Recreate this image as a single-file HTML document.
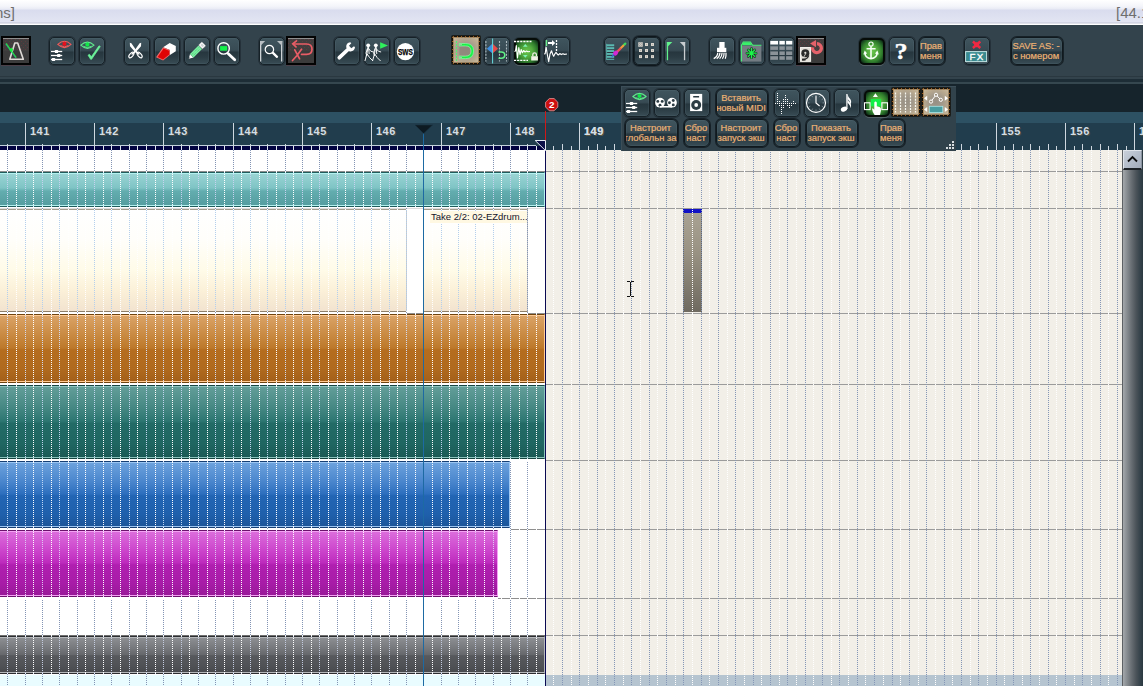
<!DOCTYPE html>
<html lang="ru"><head><meta charset="utf-8"><title>REAPER</title>
<style>
*{box-sizing:border-box;margin:0;padding:0}
html,body{width:1143px;height:686px;overflow:hidden;background:#33434c;font-family:"Liberation Sans",sans-serif}
#app{position:relative;width:1143px;height:686px;overflow:hidden;background:#33434c}
.abs{position:absolute}
#title{left:0;top:0;width:1143px;height:25px;background:linear-gradient(#ffffff 0px,#f4f5fa 6px,#e9ebf5 9px,#d9dcee 10px,#dfe2f1 18px,#e3e5f2 22px,#c3c6d6 23px,#ffffff 24px,#ffffff 25px)}
#title span{position:absolute;top:3px;font-size:15px;line-height:20px;color:#6e6e6e;white-space:nowrap}
#tb{left:0;top:25px;width:1143px;height:59px;background:#33434c}
.btn{position:absolute;width:26px;height:28px;border-radius:5px;border:1px solid #162127;
 background:linear-gradient(#4b626b 0px,#3f545d 1px,#384b54 12px,#34464f 13px,#26363e 14px,#2b3c44 19px,#374a53 25px,#445a63 26px);
 box-shadow:0 0 0 1px rgba(18,27,33,.42),inset 1px 0 0 rgba(120,150,160,.13),inset -1px 0 0 rgba(120,150,160,.13)}
.btn svg{position:absolute;left:-1px;top:-1px;overflow:visible}
.btn.txt{color:#ecb274;-webkit-text-stroke:.2px #ecb274;font-size:9.4px;line-height:10px;white-space:nowrap;overflow:hidden;padding-top:2.75px;border-radius:6px;border:1px solid #10191e;
 display:flex;flex-direction:column;align-items:center;padding-right:2px;box-shadow:0 0 0 1px rgba(14,22,27,.75),inset 1px 0 0 rgba(120,150,160,.1),inset -1px 0 0 rgba(120,150,160,.1)}
.btn.txt div{flex:none}
.btn.pressed{width:30px;height:29px;border-radius:0;border:2px solid #030303;background:#3b3b3b;box-shadow:0 1px 0 rgba(120,60,70,.35)}
.btn.pressed svg{left:-2px;top:-2px}
.btn.tan{width:28px;height:28px;border-radius:1px;border:1px solid #15120a;background:radial-gradient(ellipse 60% 60% at 50% 50%,#968f84 0%,#a39a8b 45%,#b8a98f 80%,#c5b598 100%);box-shadow:0 0 0 1px rgba(21,18,10,.75),inset 0 0 0 1px rgba(100,64,22,.4)}
.btn.tan svg{left:-1px;top:-1px}
.btn.green{border:2px solid #060c08;background:radial-gradient(ellipse 64% 64% at 50% 50%,#6ac64c 0%,#52ab3e 40%,#2f7c2c 72%,#10341a 100%);box-shadow:0 0 0 1px rgba(20,30,36,.4),0 1px 0 rgba(190,200,205,.55)}
.btn.green{margin-top:1px;height:27px}
.btn.green svg{left:-2px;top:-3px}
.btn.hov{box-shadow:0 0 0 1px #0e171c,0 0 0 2px rgba(14,23,28,.45)}
#dark{left:0;top:84px;width:1143px;height:28px;background:#16242c}
#band{left:0;top:112px;width:1143px;height:11px;background:#2d5163}
#ruler{left:0;top:123px;width:1143px;height:27px;background:#213d4d}
.mnum{position:absolute;top:125px;font-size:11px;font-weight:bold;line-height:12px;color:#d3dde6;letter-spacing:.45px;text-shadow:1px 1px 0 rgba(120,100,60,.45)}
#arr{left:0;top:150px;width:545px;height:536px;background:#ffffff}
#empty{left:546px;top:150px;width:576px;height:536px;background:#f2efe8}
#endline{left:545px;top:150px;width:1px;height:536px;background:#0a0a52}
#vs{left:1122px;top:150px;width:21px;height:536px;background:linear-gradient(90deg,#15191c 0px,#a4a8ab 1px,#8e9397 4px,#6b7176 9px,#4c545a 14px,#36434b 18px,#2a3840 21px)}
#vsup{left:1123px;top:150px;width:19px;height:20px;background:linear-gradient(135deg,#c9d0da 0%,#b3bcc9 55%,#a2abb9 100%);border:1px solid #8a93a0;border-top-color:#dfe4ea;border-left-color:#dfe4ea;border-bottom:2px solid #1d2226}
.item{position:absolute;border:1px solid #000}
.item i{position:absolute;left:0;right:0;top:0;height:1px}
#fl{left:621px;top:86px;width:335px;height:65px;background:#31424b;border-top:1px solid #3c4e58;border-left:1px solid #3c4e58}
</style></head><body><div id="app">
<svg width="0" height="0" style="position:absolute"><defs>
<pattern id="pinkdots" width="4" height="4" patternUnits="userSpaceOnUse"><rect width="4" height="4" fill="#403e3e"/><rect x="0" y="1" width="1" height="1" fill="#5c3a3f"/><rect x="2" y="3" width="1" height="1" fill="#5c3a3f"/></pattern>
<pattern id="tanfill" width="4" height="4" patternUnits="userSpaceOnUse"><rect width="4" height="4" fill="#a9957b"/><rect x="1" y="0" width="1" height="1" fill="#b5a48c"/><rect x="3" y="2" width="1" height="1" fill="#9c8f7c"/><rect x="0" y="3" width="1" height="1" fill="#a3a08a"/></pattern>
</defs></svg>

<div id="title" class="abs"><span style="left:-5px">ns]</span><span style="left:1116px">[44.1</span></div>
<div id="tb" class="abs">
<div class="abs" style="left:0;top:51px;width:1143px;height:1px;background:#2a3840"></div>
<div class="abs" style="left:0;top:54px;width:1143px;height:3px;background:#1d2d36"></div>
<div class="abs" style="left:0;top:57px;width:1143px;height:2px;background:#35474f"></div>
</div>
<div class="btn pressed" style="left:1px;top:36px;"><svg width="30" height="29" viewBox="0 0 30 29" ><rect x="2" y="2" width="26" height="1" fill="#8e8e8e"/><rect x="2" y="3" width="26" height="12" fill="url(#pinkdots)"/><path d="M8.800 23.200 L13.800 7 L16.700 7 L22.300 23.200 Z" fill="none" stroke="#dedad6" stroke-width="1.600" stroke-linejoin="round"/><path d="M5 7.500 L15.200 21.700" stroke="#2ae243" stroke-width="1.300"/><path d="M4.600 8 L14.600 22" stroke="#1f9fae" stroke-width=".500"/><path d="M8.200 13.500 L10.600 11.700 L12.300 14.100 L9.900 15.900 Z" fill="#16f03c"/></svg></div>
<div class="btn " style="left:49px;top:37px;"><svg width="26" height="28" viewBox="0 0 26 28" ><path d="M8.8 7.4 Q15.4 1.1000000000000005 22.0 7.4 Q15.4 13.7 8.8 7.4 Z" fill="none" stroke="#f05a5a" stroke-width="1.1"/><path d="M11.4 8.4 Q15.4 11.4 19.4 8.4" fill="none" stroke="#f05a5a" stroke-width=".9"/><circle cx="15.4" cy="6.9" r="2.1" fill="#e8101c"/><rect x="2" y="13.85" width="11.200" height="1.300" fill="#fff"/><rect x="5.9" y="13.0" width="3.200" height="3" rx=".5" fill="#fff"/><rect x="2" y="17.85" width="11.200" height="1.300" fill="#fff"/><rect x="8.1" y="17.0" width="3.200" height="3" rx=".5" fill="#fff"/><rect x="2" y="21.85" width="11.200" height="1.300" fill="#fff"/><rect x="2.9" y="21.0" width="3.200" height="3" rx=".5" fill="#fff"/></svg></div>
<div class="btn " style="left:79px;top:37px;"><svg width="26" height="28" viewBox="0 0 26 28" ><path d="M1.8000000000000007 8.2 Q8.4 1.8999999999999995 15.0 8.2 Q8.4 14.5 1.8000000000000007 8.2 Z" fill="none" stroke="#5fe88c" stroke-width="1.1"/><path d="M4.4 9.2 Q8.4 12.2 12.4 9.2" fill="none" stroke="#5fe88c" stroke-width=".9"/><circle cx="8.4" cy="7.699999999999999" r="2.1" fill="#10e848"/><path d="M9 18.200 L10.500 17.300 L12.300 19.800 L20 8.800 L21.300 9.500 L12.600 22.300 L11.600 22.300 Z" fill="#6cf29a" stroke="#6cf29a" stroke-width=".700" stroke-linejoin="round"/></svg></div>
<div class="btn " style="left:124px;top:37px;"><svg width="26" height="28" viewBox="0 0 26 28" ><path d="M5.800 5.800 L7.400 6.300 L13.300 14.800 L16 17 L14.800 17.800 L11.300 15.300 L6 9.200 Z" fill="#fff"/><path d="M17.200 5.800 L15.600 6.300 L9.700 14.800 L7 17 L8.200 17.800 L11.700 15.300 L17 9.200 Z" fill="#fff"/><g fill="none" stroke="#fff" stroke-width="1.150"><ellipse cx="7.400" cy="18" rx="1.700" ry="3.300" transform="rotate(42 7.400 18)"/><ellipse cx="15.600" cy="18" rx="1.700" ry="3.300" transform="rotate(-42 15.600 18)"/></g></svg></div>
<div class="btn " style="left:154px;top:37px;"><svg width="26" height="28" viewBox="0 0 26 28" ><path d="M9.100 10.300 L15.700 5.900 L21.800 9.100 L21.800 14.300 L15.900 17.900 L15.900 13 Z" fill="#fff"/><path d="M9.100 10.300 L15.900 13 L15.900 17.900 L9.100 23.600 L2 20.300 Z" fill="#f36a6a"/><path d="M9.600 11.600 L15.200 13.800 L15.200 17.600 L9 22.600 L3.600 20 Z" fill="#e00404"/></svg></div>
<div class="btn " style="left:184px;top:37px;"><svg width="26" height="28" viewBox="0 0 26 28" ><g transform="translate(4.800 21.800) rotate(-45)"><path d="M0 0 L4.200 -2.500 L4.200 2.500 Z" fill="#fff"/><path d="M0 0 L1.600 -.9 L1.600 .9 Z" fill="#888"/><rect x="4.200" y="-2.500" width="12" height="5" fill="#7af0a0"/><path d="M4.200 -.9 H16.200 M4.200 .9 H16.200" stroke="#2f9a58" stroke-width=".600" stroke-dasharray="1 1"/><rect x="16.700" y="-2.700" width="4.400" height="5.400" rx=".8" fill="#fff" stroke="#d0d0d0" stroke-width=".5"/><rect x="17.900" y="-1.500" width="2.200" height="3" fill="#cfd4d6"/></g></svg></div>
<div class="btn " style="left:214px;top:37px;"><svg width="26" height="28" viewBox="0 0 26 28" ><path d="M14.300 16.700 L20.700 22.800" stroke="#fff" stroke-width="2.800" stroke-linecap="round"/><circle cx="9.600" cy="11.400" r="5.700" fill="none" stroke="#fff" stroke-width="1.400"/><rect x="6.100" y="9.100" width="7" height="4.600" fill="#14f04a"/></svg></div>
<div class="btn " style="left:259px;top:37px;"><svg width="26" height="28" viewBox="0 0 26 28" ><rect x="1" y="4" width="1.300" height="20.500" fill="#cdd2d5"/><path d="M1 4 H6.200 L1.500 8.800 Z" fill="#b9bfc3"/><rect x="22" y="4" width="1.300" height="20.500" fill="#cdd2d5"/><path d="M23.300 4 H18 L22.800 8.800 Z" fill="#b9bfc3"/><path d="M13.700 15.700 L18 19.800" stroke="#fff" stroke-width="2.300" stroke-linecap="round"/><circle cx="10.400" cy="12.500" r="4.200" fill="none" stroke="#fff" stroke-width="1.200"/></svg></div>
<div class="btn pressed" style="left:286px;top:36px;"><svg width="30" height="29" viewBox="0 0 30 29" ><rect x="2" y="2" width="26" height="1" fill="#8e8e8e"/><rect x="2" y="3" width="26" height="12" fill="url(#pinkdots)"/><g fill="none" stroke="#e85d66" stroke-width="1.700" stroke-linecap="round"><path d="M7.500 8 H20.500 Q26 8 26 13.200 Q26 18.300 20.500 18.300 H15.500"/><path d="M10.500 4.800 L6.800 7.800 L10 10.800"/><path d="M8.800 13.800 L13.600 22.800 M15.500 13.200 L11 19.500 L6.500 24.500"/></g></svg></div>
<div class="btn " style="left:334px;top:37px;"><svg width="26" height="28" viewBox="0 0 26 28" ><path d="M5.300 20.700 L14.500 12" stroke="#fff" stroke-width="3.700" stroke-linecap="round"/><path d="M12.200 10.200 Q12 5.800 16.300 5.300 L17.300 6.300 L15 8.800 L17.300 11.300 L20 9.200 L21 10.300 Q20.500 14.500 16.300 14.400 Q14 14.300 12.200 10.200 Z" fill="#fff"/></svg></div>
<div class="btn " style="left:364px;top:37px;"><svg width="26" height="28" viewBox="0 0 26 28" ><circle cx="4.2" cy="8.300" r="1.900" fill="#fff"/><path d="M3.9000000000000004 10 L2.9000000000000004 17 L0.9000000000000004 24 M3.2 17 L5.5 20.500 L9.0 24 M4.5 10 L5.2 17 M3.4000000000000004 11.500 L2.0 16 L3.0 19 M4.5 11.500 L6.9 14.300 L9.5 15" fill="none" stroke="#fff" stroke-width=".950"/><circle cx="11.8" cy="8.300" r="1.900" fill="#fff"/><path d="M11.5 10 L10.5 17 L8.5 24 M10.8 17 L13.100000000000001 20.500 L16.6 24 M12.100000000000001 10 L12.8 17 M11.0 11.500 L9.600000000000001 16 L10.600000000000001 19 M12.100000000000001 11.500 L14.5 14.300 L17.1 15" fill="none" stroke="#fff" stroke-width=".950"/><path d="M16.100 5.300 L24 8.500 L16.100 11.700 Z" fill="#2ff05c"/></svg></div>
<div class="btn " style="left:394px;top:37px;"><svg width="26" height="28" viewBox="0 0 26 28" ><circle cx="11.400" cy="14.700" r="8.650" fill="#fff"/><text x="3.900" y="18" font-family="Liberation Sans,sans-serif" font-size="9.200" font-weight="bold" fill="#000" stroke="#000" stroke-width=".25" textLength="15" lengthAdjust="spacingAndGlyphs">SWS</text></svg></div>
<div class="btn tan" style="left:452px;top:36px;"><svg width="28" height="28" viewBox="0 0 28 28" ><path d="M1 .500 H27 M1 27.5 H27 M.500 1 V27 M27.5 1 V27" stroke="#9a5a1c" stroke-width="1" stroke-dasharray="1 3" shape-rendering="crispEdges"/><path d="M2 1.500 H26 M1.500 2 V26" stroke="#e9a050" stroke-width="1" stroke-dasharray="1 2" shape-rendering="crispEdges" opacity=".3"/><g transform="translate(-1 0)"><path d="M8.500 10.500 H14.500 Q19.500 10.500 19.500 15 Q19.500 19.600 14.500 19.600 H8.500 Z" fill="#8d867b" opacity=".8"/><path d="M5.500 5 V25" stroke="#4cf074" stroke-width="1.100" stroke-dasharray="2 1"/><path d="M8.300 7.500 H14.700 Q22.600 7.500 22.600 15 Q22.600 22.600 14.700 22.600 H8.300 V20.200 H14.500 Q20.100 20.200 20.100 15 Q20.100 9.900 14.500 9.900 H8.300 Z" fill="#19f045" stroke="#86ffa4" stroke-width=".700"/><rect x="8.600" y="8.200" width="2.400" height="1" fill="#a8cfa8"/><rect x="8.600" y="20.900" width="2.400" height="1" fill="#a8cfa8"/></g></svg></div>
<div class="btn " style="left:484px;top:37px;"><svg width="26" height="28" viewBox="0 0 26 28" ><path d="M1.900 4 V24.500 M15.500 4 V24.500 M22.500 4 V24.500" stroke="#aebabf" stroke-width="1.100" stroke-dasharray="2 1.200"/><path d="M8.500 6.600 L2.900 11.700 L8.500 16.400 Z" fill="#3d8fe6"/><path d="M8.500 6.600 L14 11.700 L8.500 16.400 Z" fill="#ea4848"/><rect x="8" y="1.500" width="1.100" height="25" fill="#62cdd0"/><path d="M14.500 15 H17.300 Q20.800 15 20.800 18.100 Q20.800 21.300 17.300 21.300 H14.500" fill="none" stroke="#62f088" stroke-width="1.600"/></svg></div>
<div class="btn green" style="left:514px;top:37px;"><svg width="26" height="28" viewBox="0 0 26 28" ><path d="M0 4.500 H17.500 M0 23.400 H14" stroke="#fff" stroke-width="1.400" stroke-dasharray="2.200 .9"/><path d="M9 9.700 L11.300 7 L13.600 9.700 Z M9 18.100 L11.300 20.800 L13.600 18.100 Z" fill="#7cf2b4"/><path d="M.500 14.500 L1.500 14 L2.300 8.500 L3.500 21 L4.800 10.500 L6 17.500 L7.200 12.500 L8.400 15.800 L9.600 13.500 L11 15 L12.500 14 L14 14.800 L16 14.500" fill="none" stroke="#fff" stroke-width="1.100" stroke-linejoin="round"/><rect x="17.200" y="19.200" width="6.700" height="4.300" fill="#f1f0e5"/><path d="M18.800 19.200 V17.600 Q18.800 15.800 20.600 15.800 Q22.400 15.800 22.400 17.600 V19.200" fill="none" stroke="#f1f0e5" stroke-width="1.300"/></svg></div>
<div class="btn " style="left:544px;top:37px;"><svg width="26" height="28" viewBox="0 0 26 28" ><rect x="1.800" y="3" width="1.400" height="6" fill="#6cf08c"/><path d="M4 5.100 H8 V3 L11.200 6 L8 9 V6.900 H4 Z" fill="#fff"/><path d="M12.500 3 V14.500" stroke="#fff" stroke-width="1.300" stroke-dasharray="2 1"/><path d="M.300 17.200 L1.200 16.500 L2.100 10.200 L3.400 18 L4.700 24.700 L6 17 L7.500 13.800 L8.800 17.500 L9.700 19.300 L10.800 17 L12 15.300 L13.200 17 L14.300 18 L15.800 16.600 L17.300 17.600 L19 16.700 L20.500 17.400 L23 17" fill="none" stroke="#fff" stroke-width="1.150" stroke-linejoin="round"/></svg></div>
<div class="btn " style="left:604px;top:37px;"><svg width="26" height="28" viewBox="0 0 26 28" ><g fill="#5bb9b2"><rect x="2.600" y="7.3" width="7.600" height="1.900"/><rect x="2.600" y="10.2" width="7.600" height="1.900"/><rect x="2.600" y="13.1" width="7.600" height="1.900"/><rect x="2.600" y="16" width="7.600" height="1.900"/><rect x="2.600" y="18.9" width="7.600" height="1.900"/><rect x="2.600" y="21.800" width="7.600" height="1"/><rect x="2.300" y="6.800" width=".8" height="16"/></g><path d="M21.300 6.600 L19.600 8.300" stroke="#3fd85a" stroke-width="2.200" stroke-linecap="round"/><path d="M19.200 8.700 L16.600 11.300" stroke="#f09a3a" stroke-width="2.300" stroke-linecap="round"/><path d="M16.200 11.800 L13.500 14.400" stroke="#ee4f5a" stroke-width="2.300" stroke-linecap="round"/><ellipse cx="11.600" cy="16.100" rx="2.200" ry="2.800" fill="#d22ad2" transform="rotate(45 11.600 16.100)"/><path d="M10.300 17.800 Q9.300 19.800 7.200 20.800 Q8 18.500 9 17.300 Z" fill="#3a62e0"/></svg></div>
<div class="btn hov" style="left:634px;top:37px;"><svg width="26" height="28" viewBox="0 0 26 28" ><rect x="4.200" y="5.200" width="4.600" height="4.600" fill="#cfcbc4"/><path d="M4.500 5.500 L8.500 9.500 M6.500 5.300 L8.700 7.500 M4.300 7.300 L6.700 9.700" stroke="#8b9094" stroke-width=".600"/><rect x="11.0" y="6.0" width="3" height="3" fill="#d9d5cd"/><rect x="12.0" y="7.0" width="1" height="1" fill="#b0b0aa"/><rect x="17.0" y="6.0" width="3" height="3" fill="#d9d5cd"/><rect x="18.0" y="7.0" width="1" height="1" fill="#b0b0aa"/><rect x="5.0" y="12.0" width="3" height="3" fill="#d9d5cd"/><rect x="6.0" y="13.0" width="1" height="1" fill="#b0b0aa"/><rect x="11.0" y="12.0" width="3" height="3" fill="#d9d5cd"/><rect x="12.0" y="13.0" width="1" height="1" fill="#b0b0aa"/><rect x="17.0" y="12.0" width="3" height="3" fill="#d9d5cd"/><rect x="18.0" y="13.0" width="1" height="1" fill="#b0b0aa"/><rect x="5.0" y="18.1" width="3" height="3" fill="#d9d5cd"/><rect x="6.0" y="19.1" width="1" height="1" fill="#b0b0aa"/><rect x="11.0" y="18.1" width="3" height="3" fill="#d9d5cd"/><rect x="12.0" y="19.1" width="1" height="1" fill="#b0b0aa"/><rect x="17.0" y="18.1" width="3" height="3" fill="#d9d5cd"/><rect x="18.0" y="19.1" width="1" height="1" fill="#b0b0aa"/></svg></div>
<div class="btn " style="left:664px;top:37px;"><svg width="26" height="28" viewBox="0 0 26 28" ><rect x="2.800" y="5" width="1.300" height="18.200" fill="#62f28c"/><path d="M2.800 5 H8.300 L3.800 9.600 Z" fill="#62f28c"/><rect x="19.900" y="5" width="1.300" height="18.200" fill="#c9cdd0"/><path d="M21.200 5 H15.800 L20.300 9.800 Z" fill="#c9cdd0"/></svg></div>
<div class="btn " style="left:709px;top:37px;"><svg width="26" height="28" viewBox="0 0 26 28" ><rect x="10.300" y="5" width="5.300" height="6.300" fill="#fff"/><rect x="8" y="10.800" width="9.300" height="4.300" fill="#fff"/><path d="M8.800 15.800 Q8.300 19.800 4.700 21.600 M11 15.800 Q10.600 19.800 7.700 21.700 M13.100 15.800 Q13 19.800 10.600 21.700 M15.100 15.800 Q15.200 19.800 13.400 21.700 M17 15.800 Q17.300 19.600 16.200 21.700" stroke="#fff" stroke-width="1.250" fill="none"/></svg></div>
<div class="btn " style="left:739px;top:37px;"><svg width="26" height="28" viewBox="0 0 26 28" ><rect x="2.800" y="8.600" width="19.600" height="16" fill="#747c83"/><path d="M2.400 24.500 V8.300 L4.300 5 H11.400 L13.600 8.300 H22.400" fill="none" stroke="#4cf47a" stroke-width="1.100"/><path d="M2.800 8.300 L4.500 5.200 H11.200 L13.300 8.300 Z" fill="#39f06a"/><g stroke="#1c2a22" stroke-width="2.600" stroke-linecap="round"><path d="M12.500 11.600 V20.800 M7.900 16.200 H17.100 M9.200 12.900 L15.800 19.500 M15.800 12.900 L9.200 19.500"/></g><g stroke="#1cf54a" stroke-width="1.250" stroke-linecap="round"><path d="M12.500 11.400 V21 M7.700 16.200 H17.300 M9.100 12.800 L15.900 19.600 M15.900 12.800 L9.100 19.600"/></g></svg></div>
<div class="btn " style="left:769px;top:37px;"><svg width="26" height="28" viewBox="0 0 26 28" ><rect x="1.3" y="3.900" width="7.7" height="3.600" fill="#fff"/><rect x="10.4" y="3.900" width="5.4" height="3.600" fill="#fff"/><rect x="17.1" y="3.900" width="6.2" height="3.600" fill="#fff"/><rect x="1.3" y="9.3" width="7.7" height="3.600" fill="#8b9399"/><rect x="10.4" y="9.3" width="5.4" height="3.600" fill="#8b9399"/><rect x="17.1" y="9.3" width="6.2" height="3.600" fill="#8b9399"/><rect x="1.3" y="14.4" width="7.7" height="3.600" fill="#8b9399"/><rect x="10.4" y="14.4" width="5.4" height="3.600" fill="#8b9399"/><rect x="17.1" y="14.4" width="6.2" height="3.600" fill="#8b9399"/><rect x="1.3" y="19.2" width="7.7" height="3.600" fill="#8b9399"/><rect x="10.4" y="19.2" width="5.4" height="3.600" fill="#8b9399"/><rect x="17.1" y="19.2" width="6.2" height="3.600" fill="#8b9399"/></svg></div>
<div class="btn pressed" style="left:796px;top:36px;"><svg width="30" height="29" viewBox="0 0 30 29" ><rect x="2" y="2" width="26" height="1" fill="#8e8e8e"/><rect x="2" y="3" width="26" height="12" fill="url(#pinkdots)"/><rect x="4" y="11" width="11.100" height="14.900" fill="#e2dfd8"/><rect x="4.700" y="11.700" width="9.700" height="13.500" fill="none" stroke="#fbfbf8" stroke-width=".600"/><circle cx="9.300" cy="17.300" r="4" fill="#2a2a2a"/><circle cx="9.300" cy="16.800" r="1.100" fill="#e2dfd8"/><path d="M9.800 17.600 L6.800 22.500" stroke="#e2dfd8" stroke-width=".800"/><path d="M12.600 19.500 Q12 23 6.500 23.800" fill="none" stroke="#2a2a2a" stroke-width="1.400"/><rect x="6" y="22.600" width="3.500" height="2" fill="#2a2a2a"/><path d="M20.900 7.650 A4.450 4.450 0 1 1 16.520 11.330" fill="none" stroke="#e4626a" stroke-width="3.300"/><path d="M14.100 7.600 L20 3.900 L20 11.300 Z" fill="#e4626a"/></svg></div>
<div class="btn green" style="left:859px;top:37px;"><svg width="26" height="28" viewBox="0 0 26 28" ><circle cx="12" cy="7.100" r="2.100" fill="none" stroke="#f4fff4" stroke-width="1.200"/><path d="M12 9.200 V21.500 M7.600 11.700 H16.600" stroke="#f4fff4" stroke-width="1.600" fill="none"/><path d="M5.800 15.300 Q6 21.300 12 21.600 Q18 21.300 18.300 15.300" stroke="#f4fff4" stroke-width="1.700" fill="none"/><path d="M4.300 17.400 L5.700 13.600 L8.200 16.600 Z M19.800 17.400 L18.400 13.600 L15.900 16.600 Z" fill="#f4fff4"/></svg></div>
<div class="btn " style="left:889px;top:37px;"><svg width="26" height="28" viewBox="0 0 26 28" ><text transform="translate(12 22.200) scale(1.13 1)" x="0" y="0" font-family="Liberation Serif,serif" font-size="23.300" font-weight="bold" fill="#fff" stroke="#fff" stroke-width=".3" text-anchor="middle">?</text></svg></div>
<div class="btn txt " style="left:919px;top:37px;"><div>Прав</div><div>меня</div></div>
<div class="btn " style="left:964px;top:37px;"><svg width="26" height="28" viewBox="0 0 26 28" ><path d="M8.900 4.500 L16.300 11 M16.300 4.500 L8.900 11" stroke="#f02842" stroke-width="2.500"/><path d="M12.600 5.300 V10.200 M10.100 7.750 H15.100" stroke="#f02842" stroke-width="1.400"/><rect x="1.600" y="14.600" width="21" height="10" fill="#3a8a8f" stroke="#c4e4e4" stroke-width="1"/><text x="5.600" y="23" font-family="Liberation Sans,sans-serif" font-size="9.700" fill="#fff" stroke="#fff" stroke-width=".35" letter-spacing="1.300">FX</text></svg></div>
<div class="btn txt " style="left:1011px;top:37px;width:52px;"><div>SAVE AS: -</div><div>с номером</div></div>
<div id="dark" class="abs"></div><div id="band" class="abs"></div><div id="ruler" class="abs"></div>
<div id="arr" class="abs"></div><div id="empty" class="abs"></div>
<div class="abs" style="left:0;top:675px;width:545px;height:11px;background:#e9fcff"></div>
<div class="abs" style="left:546px;top:675px;width:576px;height:11px;background:#b5c4d0"></div>
<div class="abs" style="left:0px;top:171px;width:545px;height:1px;background:#8c8c8c"></div>
<div class="abs" style="left:546px;top:171px;width:576px;height:1px;background:#9b9b9b"></div>
<div class="abs" style="left:0px;top:208px;width:545px;height:1px;background:#dcdcdc"></div>
<div class="abs" style="left:546px;top:208px;width:576px;height:1px;background:#9b9b9b"></div>
<div class="abs" style="left:407px;top:313px;width:17px;height:1px;background:#8f8f8f"></div>
<div class="abs" style="left:528px;top:313px;width:17px;height:1px;background:#8f8f8f"></div>
<div class="abs" style="left:546px;top:313px;width:576px;height:1px;background:#9b9b9b"></div>
<div class="abs" style="left:546px;top:384px;width:576px;height:1px;background:#9b9b9b"></div>
<div class="abs" style="left:546px;top:460px;width:576px;height:1px;background:#9b9b9b"></div>
<div class="abs" style="left:510px;top:529px;width:35px;height:1px;background:#8f8f8f"></div>
<div class="abs" style="left:546px;top:529px;width:576px;height:1px;background:#9b9b9b"></div>
<div class="abs" style="left:498px;top:598px;width:47px;height:1px;background:#8f8f8f"></div>
<div class="abs" style="left:546px;top:598px;width:576px;height:1px;background:#9b9b9b"></div>
<div class="abs" style="left:0px;top:635px;width:545px;height:1px;background:#6f6f6f"></div>
<div class="abs" style="left:546px;top:635px;width:576px;height:1px;background:#9b9b9b"></div>
<div class="abs" style="left:0;top:146px;width:545px;height:4px;background:#020240"></div>
<div class="abs" style="left:0;top:145px;width:536px;height:1px;background:#c3d0db"></div>
<div class="item" style="left:-2px;top:172px;width:547px;height:35px;background:linear-gradient(#9bd5d5 0%,#7fc4c5 45%,#63adaf 55%,#549c9f 100%);border-color:#1f5c5c;border-right-color:#b4f1f0;box-shadow:inset 0 1px 0 #b4f1f0,inset 0 -1px 0 #b4f1f0;"></div>
<div class="item" style="left:-2px;top:209px;width:409px;height:103px;background:linear-gradient(#ffffff 0%,#fffefa 30%,#fffbe8 60%,#fbf0d8 80%,#f2e3cf 100%);border-color:#a39b8c;border-right-color:#c8c8c8;border-bottom-color:#8d7f6a"></div>
<div class="item" style="left:423px;top:209px;width:105px;height:103px;background:linear-gradient(#ffffff 0%,#fffefa 30%,#fffbe8 60%,#fbf0d8 80%,#f2e3cf 100%);border-color:#a39b8c;border-left-color:#c8c8c8;border-right-color:#c8c8c8;border-bottom-color:#8d7f6a"></div>
<div class="item" style="left:-2px;top:314px;width:547px;height:69px;background:linear-gradient(#dba468 0%,#c98a42 30%,#bd792b 49%,#b56d1f 52%,#b06a1e 80%,#a35f19 100%);border-color:#6f430e;border-right-color:#ffcb94;box-shadow:inset 0 1px 0 #ffcb94,inset 0 -1px 0 #ffcb94;border-right-color:#ffcb94"></div>
<div class="item" style="left:-2px;top:385px;width:547px;height:74px;background:linear-gradient(#649f9a 0%,#458883 30%,#2c7671 49%,#226b66 52%,#1f6661 80%,#1a5955 100%);border-color:#164440;border-right-color:#8cc4be;box-shadow:inset 0 1px 0 #8cc4be,inset 0 -1px 0 #8cc4be;"></div>
<div class="item" style="left:-2px;top:461px;width:512px;height:67px;background:linear-gradient(#6ea3de 0%,#4a86cd 30%,#2d6fbe 49%,#2265b4 52%,#1f60ac 80%,#1b5599 100%);border-color:#163f73;border-right-color:#9cc6f2;box-shadow:inset 0 1px 0 #9cc6f2,inset 0 -1px 0 #9cc6f2;"></div>
<div class="item" style="left:-2px;top:530px;width:500px;height:67px;background:linear-gradient(#dd6fdd 0%,#cc45cc 30%,#bd2bbd 49%,#b01fb0 52%,#a81ca8 80%,#981898 100%);border-color:#6c116c;border-right-color:#f3a2f3;box-shadow:inset 0 1px 0 #f3a2f3,inset 0 -1px 0 #f3a2f3;"></div>
<div class="item" style="left:-2px;top:636px;width:547px;height:38px;background:linear-gradient(#8f9195 0%,#77797d 30%,#66686c 49%,#57595d 52%,#505256 80%,#46484c 100%);border-color:#2b2d30;border-right-color:#b6b8bb;box-shadow:inset 0 1px 0 #b6b8bb,inset 0 -1px 0 #b6b8bb;"></div>
<div class="item" style="left:683px;top:209px;width:19px;height:103px;background:linear-gradient(#aaa394 0%,#9a9384 40%,#857f72 70%,#6f6a60 100%);border-color:#6f6a60;"></div>
<div class="abs" style="left:683px;top:209px;width:19px;height:4px;background:#1212c4"></div>
<svg class="abs" style="left:0;top:0" width="1143" height="686" viewBox="0 0 1143 686" shape-rendering="crispEdges">
<path d="M7.5 150V686M25.5 150V686M42.5 150V686M59.5 150V686M77.5 150V686M94.5 150V686M111.5 150V686M129.5 150V686M146.5 150V686M163.5 150V686M181.5 150V686M198.5 150V686M215.5 150V686M233.5 150V686M250.5 150V686M267.5 150V686M285.5 150V686M302.5 150V686M319.5 150V686M337.5 150V686M354.5 150V686M371.5 150V686M389.5 150V686M406.5 150V686M423.5 150V686M441.5 150V686M458.5 150V686M475.5 150V686M493.5 150V686M510.5 150V686M527.5 150V686" stroke="#8394b4" stroke-dasharray="1 1" fill="none"/>
<path d="M7.5 172V207M25.5 172V207M42.5 172V207M59.5 172V207M77.5 172V207M94.5 172V207M111.5 172V207M129.5 172V207M146.5 172V207M163.5 172V207M181.5 172V207M198.5 172V207M215.5 172V207M233.5 172V207M250.5 172V207M267.5 172V207M285.5 172V207M302.5 172V207M319.5 172V207M337.5 172V207M354.5 172V207M371.5 172V207M389.5 172V207M406.5 172V207M423.5 172V207M441.5 172V207M458.5 172V207M475.5 172V207M493.5 172V207M510.5 172V207M527.5 172V207" stroke="#c6d2f0" stroke-dasharray="1 1" fill="none"/>
<path d="M7.5 314V383M25.5 314V383M42.5 314V383M59.5 314V383M77.5 314V383M94.5 314V383M111.5 314V383M129.5 314V383M146.5 314V383M163.5 314V383M181.5 314V383M198.5 314V383M215.5 314V383M233.5 314V383M250.5 314V383M267.5 314V383M285.5 314V383M302.5 314V383M319.5 314V383M337.5 314V383M354.5 314V383M371.5 314V383M389.5 314V383M406.5 314V383M423.5 314V383M441.5 314V383M458.5 314V383M475.5 314V383M493.5 314V383M510.5 314V383M527.5 314V383" stroke="#d4dcf2" stroke-dasharray="1 1" fill="none"/>
<path d="M7.5 386V459M25.5 386V459M42.5 386V459M59.5 386V459M77.5 386V459M94.5 386V459M111.5 386V459M129.5 386V459M146.5 386V459M163.5 386V459M181.5 386V459M198.5 386V459M215.5 386V459M233.5 386V459M250.5 386V459M267.5 386V459M285.5 386V459M302.5 386V459M319.5 386V459M337.5 386V459M354.5 386V459M371.5 386V459M389.5 386V459M406.5 386V459M423.5 386V459M441.5 386V459M458.5 386V459M475.5 386V459M493.5 386V459M510.5 386V459M527.5 386V459" stroke="#c0d4ee" stroke-dasharray="1 1" fill="none"/>
<path d="M7.5 462V528M25.5 462V528M42.5 462V528M59.5 462V528M77.5 462V528M94.5 462V528M111.5 462V528M129.5 462V528M146.5 462V528M163.5 462V528M181.5 462V528M198.5 462V528M215.5 462V528M233.5 462V528M250.5 462V528M267.5 462V528M285.5 462V528M302.5 462V528M319.5 462V528M337.5 462V528M354.5 462V528M371.5 462V528M389.5 462V528M406.5 462V528M423.5 462V528M441.5 462V528M458.5 462V528M475.5 462V528M493.5 462V528" stroke="#c0d8f6" stroke-dasharray="1 1" fill="none"/>
<path d="M7.5 530V597M25.5 530V597M42.5 530V597M59.5 530V597M77.5 530V597M94.5 530V597M111.5 530V597M129.5 530V597M146.5 530V597M163.5 530V597M181.5 530V597M198.5 530V597M215.5 530V597M233.5 530V597M250.5 530V597M267.5 530V597M285.5 530V597M302.5 530V597M319.5 530V597M337.5 530V597M354.5 530V597M371.5 530V597M389.5 530V597M406.5 530V597M423.5 530V597M441.5 530V597M458.5 530V597M475.5 530V597M493.5 530V597" stroke="#e0c8f4" stroke-dasharray="1 1" fill="none"/>
<path d="M7.5 636V674M25.5 636V674M42.5 636V674M59.5 636V674M77.5 636V674M94.5 636V674M111.5 636V674M129.5 636V674M146.5 636V674M163.5 636V674M181.5 636V674M198.5 636V674M215.5 636V674M233.5 636V674M250.5 636V674M267.5 636V674M285.5 636V674M302.5 636V674M319.5 636V674M337.5 636V674M354.5 636V674M371.5 636V674M389.5 636V674M406.5 636V674M423.5 636V674M441.5 636V674M458.5 636V674M475.5 636V674M493.5 636V674M510.5 636V674M527.5 636V674" stroke="#c4cce0" stroke-dasharray="1 1" fill="none"/>
<path d="M7.5 210V311M25.5 210V311M42.5 210V311M59.5 210V311M77.5 210V311M94.5 210V311M111.5 210V311M129.5 210V311M146.5 210V311M163.5 210V311M181.5 210V311M198.5 210V311M215.5 210V311M233.5 210V311M250.5 210V311M267.5 210V311M285.5 210V311M302.5 210V311M319.5 210V311M337.5 210V311M354.5 210V311M371.5 210V311M389.5 210V311M406.5 210V311M441.5 210V311M458.5 210V311M475.5 210V311M493.5 210V311M510.5 210V311" stroke="#b4cfec" stroke-dasharray="1 1" fill="none"/>
<path d="M16.5 172V207M16.5 314V383M16.5 386V459M16.5 462V528M16.5 530V597M16.5 636V674M16.5 210V311M33.5 172V207M33.5 314V383M33.5 386V459M33.5 462V528M33.5 530V597M33.5 636V674M33.5 210V311M51.5 172V207M51.5 314V383M51.5 386V459M51.5 462V528M51.5 530V597M51.5 636V674M51.5 210V311M68.5 172V207M68.5 314V383M68.5 386V459M68.5 462V528M68.5 530V597M68.5 636V674M68.5 210V311M85.5 172V207M85.5 314V383M85.5 386V459M85.5 462V528M85.5 530V597M85.5 636V674M85.5 210V311M103.5 172V207M103.5 314V383M103.5 386V459M103.5 462V528M103.5 530V597M103.5 636V674M103.5 210V311M120.5 172V207M120.5 314V383M120.5 386V459M120.5 462V528M120.5 530V597M120.5 636V674M120.5 210V311M137.5 172V207M137.5 314V383M137.5 386V459M137.5 462V528M137.5 530V597M137.5 636V674M137.5 210V311M155.5 172V207M155.5 314V383M155.5 386V459M155.5 462V528M155.5 530V597M155.5 636V674M155.5 210V311M172.5 172V207M172.5 314V383M172.5 386V459M172.5 462V528M172.5 530V597M172.5 636V674M172.5 210V311M189.5 172V207M189.5 314V383M189.5 386V459M189.5 462V528M189.5 530V597M189.5 636V674M189.5 210V311M207.5 172V207M207.5 314V383M207.5 386V459M207.5 462V528M207.5 530V597M207.5 636V674M207.5 210V311M224.5 172V207M224.5 314V383M224.5 386V459M224.5 462V528M224.5 530V597M224.5 636V674M224.5 210V311M241.5 172V207M241.5 314V383M241.5 386V459M241.5 462V528M241.5 530V597M241.5 636V674M241.5 210V311M259.5 172V207M259.5 314V383M259.5 386V459M259.5 462V528M259.5 530V597M259.5 636V674M259.5 210V311M276.5 172V207M276.5 314V383M276.5 386V459M276.5 462V528M276.5 530V597M276.5 636V674M276.5 210V311M293.5 172V207M293.5 314V383M293.5 386V459M293.5 462V528M293.5 530V597M293.5 636V674M293.5 210V311M311.5 172V207M311.5 314V383M311.5 386V459M311.5 462V528M311.5 530V597M311.5 636V674M311.5 210V311M328.5 172V207M328.5 314V383M328.5 386V459M328.5 462V528M328.5 530V597M328.5 636V674M328.5 210V311M345.5 172V207M345.5 314V383M345.5 386V459M345.5 462V528M345.5 530V597M345.5 636V674M345.5 210V311M363.5 172V207M363.5 314V383M363.5 386V459M363.5 462V528M363.5 530V597M363.5 636V674M363.5 210V311M380.5 172V207M380.5 314V383M380.5 386V459M380.5 462V528M380.5 530V597M380.5 636V674M380.5 210V311M397.5 172V207M397.5 314V383M397.5 386V459M397.5 462V528M397.5 530V597M397.5 636V674M397.5 210V311M415.5 172V207M415.5 314V383M415.5 386V459M415.5 462V528M415.5 530V597M415.5 636V674M432.5 172V207M432.5 314V383M432.5 386V459M432.5 462V528M432.5 530V597M432.5 636V674M432.5 210V311M449.5 172V207M449.5 314V383M449.5 386V459M449.5 462V528M449.5 530V597M449.5 636V674M449.5 210V311M467.5 172V207M467.5 314V383M467.5 386V459M467.5 462V528M467.5 530V597M467.5 636V674M467.5 210V311M484.5 172V207M484.5 314V383M484.5 386V459M484.5 462V528M484.5 530V597M484.5 636V674M484.5 210V311M501.5 172V207M501.5 314V383M501.5 386V459M501.5 462V528M501.5 636V674M501.5 210V311M519.5 172V207M519.5 314V383M519.5 386V459M519.5 636V674M519.5 210V311M536.5 172V207M536.5 314V383M536.5 386V459M536.5 636V674M553.5 150V686M571.5 150V686M588.5 150V686M605.5 150V686M623.5 150V686M640.5 150V686M657.5 150V686M675.5 150V686M692.5 150V686M709.5 150V686M727.5 150V686M744.5 150V686M761.5 150V686M779.5 150V686M796.5 150V686M813.5 150V686M831.5 150V686M848.5 150V686M865.5 150V686M883.5 150V686M900.5 150V686M918.5 150V686M935.5 150V686M952.5 150V686M970.5 150V686M987.5 150V686M1004.5 150V686M1022.5 150V686M1039.5 150V686M1056.5 150V686M1074.5 150V686M1091.5 150V686M1108.5 150V686M692.5 214V311" stroke="#ffffff" stroke-dasharray="1 1" fill="none"/>
<path d="M562.5 150V686M579.5 150V686M597.5 150V686M614.5 150V686M631.5 150V686M649.5 150V686M666.5 150V686M683.5 150V686M701.5 150V686M718.5 150V686M735.5 150V686M753.5 150V686M770.5 150V686M787.5 150V686M805.5 150V686M822.5 150V686M839.5 150V686M857.5 150V686M874.5 150V686M892.5 150V686M909.5 150V686M926.5 150V686M944.5 150V686M961.5 150V686M978.5 150V686M996.5 150V686M1013.5 150V686M1030.5 150V686M1048.5 150V686M1065.5 150V686M1082.5 150V686M1100.5 150V686M1117.5 150V686" stroke="#8496b6" stroke-dasharray="1 1" fill="none"/>
<path d="M7 146h1v4h-1zM25 146h1v4h-1zM42 146h1v4h-1zM59 146h1v4h-1zM77 146h1v4h-1zM94 146h1v4h-1zM111 146h1v4h-1zM129 146h1v4h-1zM146 146h1v4h-1zM163 146h1v4h-1zM181 146h1v4h-1zM198 146h1v4h-1zM215 146h1v4h-1zM233 146h1v4h-1zM250 146h1v4h-1zM267 146h1v4h-1zM285 146h1v4h-1zM302 146h1v4h-1zM319 146h1v4h-1zM337 146h1v4h-1zM354 146h1v4h-1zM371 146h1v4h-1zM389 146h1v4h-1zM406 146h1v4h-1zM423 146h1v4h-1zM441 146h1v4h-1zM458 146h1v4h-1zM475 146h1v4h-1zM493 146h1v4h-1zM510 146h1v4h-1zM527 146h1v4h-1zM16 146h1v4h-1zM33 146h1v4h-1zM51 146h1v4h-1zM68 146h1v4h-1zM85 146h1v4h-1zM103 146h1v4h-1zM120 146h1v4h-1zM137 146h1v4h-1zM155 146h1v4h-1zM172 146h1v4h-1zM189 146h1v4h-1zM207 146h1v4h-1zM224 146h1v4h-1zM241 146h1v4h-1zM259 146h1v4h-1zM276 146h1v4h-1zM293 146h1v4h-1zM311 146h1v4h-1zM328 146h1v4h-1zM345 146h1v4h-1zM363 146h1v4h-1zM380 146h1v4h-1zM397 146h1v4h-1zM415 146h1v4h-1zM432 146h1v4h-1zM449 146h1v4h-1zM467 146h1v4h-1zM484 146h1v4h-1zM501 146h1v4h-1zM519 146h1v4h-1zM536 146h1v4h-1z" fill="#dfe6ee"/>
<path d="M7 171h1v1h-1zM7 313h1v1h-1zM7 384h1v1h-1zM7 460h1v1h-1zM7 529h1v1h-1zM7 598h1v1h-1zM7 635h1v1h-1zM7 209h1v1h-1zM7 311h1v1h-1zM25 171h1v1h-1zM25 313h1v1h-1zM25 384h1v1h-1zM25 460h1v1h-1zM25 529h1v1h-1zM25 598h1v1h-1zM25 635h1v1h-1zM25 209h1v1h-1zM25 311h1v1h-1zM42 171h1v1h-1zM42 313h1v1h-1zM42 384h1v1h-1zM42 460h1v1h-1zM42 529h1v1h-1zM42 598h1v1h-1zM42 635h1v1h-1zM42 209h1v1h-1zM42 311h1v1h-1zM59 171h1v1h-1zM59 313h1v1h-1zM59 384h1v1h-1zM59 460h1v1h-1zM59 529h1v1h-1zM59 598h1v1h-1zM59 635h1v1h-1zM59 209h1v1h-1zM59 311h1v1h-1zM77 171h1v1h-1zM77 313h1v1h-1zM77 384h1v1h-1zM77 460h1v1h-1zM77 529h1v1h-1zM77 598h1v1h-1zM77 635h1v1h-1zM77 209h1v1h-1zM77 311h1v1h-1zM94 171h1v1h-1zM94 313h1v1h-1zM94 384h1v1h-1zM94 460h1v1h-1zM94 529h1v1h-1zM94 598h1v1h-1zM94 635h1v1h-1zM94 209h1v1h-1zM94 311h1v1h-1zM111 171h1v1h-1zM111 313h1v1h-1zM111 384h1v1h-1zM111 460h1v1h-1zM111 529h1v1h-1zM111 598h1v1h-1zM111 635h1v1h-1zM111 209h1v1h-1zM111 311h1v1h-1zM129 171h1v1h-1zM129 313h1v1h-1zM129 384h1v1h-1zM129 460h1v1h-1zM129 529h1v1h-1zM129 598h1v1h-1zM129 635h1v1h-1zM129 209h1v1h-1zM129 311h1v1h-1zM146 171h1v1h-1zM146 313h1v1h-1zM146 384h1v1h-1zM146 460h1v1h-1zM146 529h1v1h-1zM146 598h1v1h-1zM146 635h1v1h-1zM146 209h1v1h-1zM146 311h1v1h-1zM163 171h1v1h-1zM163 313h1v1h-1zM163 384h1v1h-1zM163 460h1v1h-1zM163 529h1v1h-1zM163 598h1v1h-1zM163 635h1v1h-1zM163 209h1v1h-1zM163 311h1v1h-1zM181 171h1v1h-1zM181 313h1v1h-1zM181 384h1v1h-1zM181 460h1v1h-1zM181 529h1v1h-1zM181 598h1v1h-1zM181 635h1v1h-1zM181 209h1v1h-1zM181 311h1v1h-1zM198 171h1v1h-1zM198 313h1v1h-1zM198 384h1v1h-1zM198 460h1v1h-1zM198 529h1v1h-1zM198 598h1v1h-1zM198 635h1v1h-1zM198 209h1v1h-1zM198 311h1v1h-1zM215 171h1v1h-1zM215 313h1v1h-1zM215 384h1v1h-1zM215 460h1v1h-1zM215 529h1v1h-1zM215 598h1v1h-1zM215 635h1v1h-1zM215 209h1v1h-1zM215 311h1v1h-1zM233 171h1v1h-1zM233 313h1v1h-1zM233 384h1v1h-1zM233 460h1v1h-1zM233 529h1v1h-1zM233 598h1v1h-1zM233 635h1v1h-1zM233 209h1v1h-1zM233 311h1v1h-1zM250 171h1v1h-1zM250 313h1v1h-1zM250 384h1v1h-1zM250 460h1v1h-1zM250 529h1v1h-1zM250 598h1v1h-1zM250 635h1v1h-1zM250 209h1v1h-1zM250 311h1v1h-1zM267 171h1v1h-1zM267 313h1v1h-1zM267 384h1v1h-1zM267 460h1v1h-1zM267 529h1v1h-1zM267 598h1v1h-1zM267 635h1v1h-1zM267 209h1v1h-1zM267 311h1v1h-1zM285 171h1v1h-1zM285 313h1v1h-1zM285 384h1v1h-1zM285 460h1v1h-1zM285 529h1v1h-1zM285 598h1v1h-1zM285 635h1v1h-1zM285 209h1v1h-1zM285 311h1v1h-1zM302 171h1v1h-1zM302 313h1v1h-1zM302 384h1v1h-1zM302 460h1v1h-1zM302 529h1v1h-1zM302 598h1v1h-1zM302 635h1v1h-1zM302 209h1v1h-1zM302 311h1v1h-1zM319 171h1v1h-1zM319 313h1v1h-1zM319 384h1v1h-1zM319 460h1v1h-1zM319 529h1v1h-1zM319 598h1v1h-1zM319 635h1v1h-1zM319 209h1v1h-1zM319 311h1v1h-1zM337 171h1v1h-1zM337 313h1v1h-1zM337 384h1v1h-1zM337 460h1v1h-1zM337 529h1v1h-1zM337 598h1v1h-1zM337 635h1v1h-1zM337 209h1v1h-1zM337 311h1v1h-1zM354 171h1v1h-1zM354 313h1v1h-1zM354 384h1v1h-1zM354 460h1v1h-1zM354 529h1v1h-1zM354 598h1v1h-1zM354 635h1v1h-1zM354 209h1v1h-1zM354 311h1v1h-1zM371 171h1v1h-1zM371 313h1v1h-1zM371 384h1v1h-1zM371 460h1v1h-1zM371 529h1v1h-1zM371 598h1v1h-1zM371 635h1v1h-1zM371 209h1v1h-1zM371 311h1v1h-1zM389 171h1v1h-1zM389 313h1v1h-1zM389 384h1v1h-1zM389 460h1v1h-1zM389 529h1v1h-1zM389 598h1v1h-1zM389 635h1v1h-1zM389 209h1v1h-1zM389 311h1v1h-1zM406 171h1v1h-1zM406 313h1v1h-1zM406 384h1v1h-1zM406 460h1v1h-1zM406 529h1v1h-1zM406 598h1v1h-1zM406 635h1v1h-1zM406 209h1v1h-1zM406 311h1v1h-1zM423 171h1v1h-1zM423 313h1v1h-1zM423 384h1v1h-1zM423 460h1v1h-1zM423 529h1v1h-1zM423 598h1v1h-1zM423 635h1v1h-1zM441 171h1v1h-1zM441 313h1v1h-1zM441 384h1v1h-1zM441 460h1v1h-1zM441 529h1v1h-1zM441 598h1v1h-1zM441 635h1v1h-1zM441 209h1v1h-1zM441 311h1v1h-1zM458 171h1v1h-1zM458 313h1v1h-1zM458 384h1v1h-1zM458 460h1v1h-1zM458 529h1v1h-1zM458 598h1v1h-1zM458 635h1v1h-1zM458 209h1v1h-1zM458 311h1v1h-1zM475 171h1v1h-1zM475 313h1v1h-1zM475 384h1v1h-1zM475 460h1v1h-1zM475 529h1v1h-1zM475 598h1v1h-1zM475 635h1v1h-1zM475 209h1v1h-1zM475 311h1v1h-1zM493 171h1v1h-1zM493 313h1v1h-1zM493 384h1v1h-1zM493 460h1v1h-1zM493 529h1v1h-1zM493 598h1v1h-1zM493 635h1v1h-1zM493 209h1v1h-1zM493 311h1v1h-1zM510 171h1v1h-1zM510 313h1v1h-1zM510 384h1v1h-1zM510 460h1v1h-1zM510 529h1v1h-1zM510 598h1v1h-1zM510 635h1v1h-1zM510 209h1v1h-1zM510 311h1v1h-1zM527 171h1v1h-1zM527 313h1v1h-1zM527 384h1v1h-1zM527 460h1v1h-1zM527 529h1v1h-1zM527 598h1v1h-1zM527 635h1v1h-1zM16 171h1v1h-1zM16 313h1v1h-1zM16 384h1v1h-1zM16 460h1v1h-1zM16 529h1v1h-1zM16 598h1v1h-1zM16 635h1v1h-1zM16 209h1v1h-1zM16 311h1v1h-1zM33 171h1v1h-1zM33 313h1v1h-1zM33 384h1v1h-1zM33 460h1v1h-1zM33 529h1v1h-1zM33 598h1v1h-1zM33 635h1v1h-1zM33 209h1v1h-1zM33 311h1v1h-1zM51 171h1v1h-1zM51 313h1v1h-1zM51 384h1v1h-1zM51 460h1v1h-1zM51 529h1v1h-1zM51 598h1v1h-1zM51 635h1v1h-1zM51 209h1v1h-1zM51 311h1v1h-1zM68 171h1v1h-1zM68 313h1v1h-1zM68 384h1v1h-1zM68 460h1v1h-1zM68 529h1v1h-1zM68 598h1v1h-1zM68 635h1v1h-1zM68 209h1v1h-1zM68 311h1v1h-1zM85 171h1v1h-1zM85 313h1v1h-1zM85 384h1v1h-1zM85 460h1v1h-1zM85 529h1v1h-1zM85 598h1v1h-1zM85 635h1v1h-1zM85 209h1v1h-1zM85 311h1v1h-1zM103 171h1v1h-1zM103 313h1v1h-1zM103 384h1v1h-1zM103 460h1v1h-1zM103 529h1v1h-1zM103 598h1v1h-1zM103 635h1v1h-1zM103 209h1v1h-1zM103 311h1v1h-1zM120 171h1v1h-1zM120 313h1v1h-1zM120 384h1v1h-1zM120 460h1v1h-1zM120 529h1v1h-1zM120 598h1v1h-1zM120 635h1v1h-1zM120 209h1v1h-1zM120 311h1v1h-1zM137 171h1v1h-1zM137 313h1v1h-1zM137 384h1v1h-1zM137 460h1v1h-1zM137 529h1v1h-1zM137 598h1v1h-1zM137 635h1v1h-1zM137 209h1v1h-1zM137 311h1v1h-1zM155 171h1v1h-1zM155 313h1v1h-1zM155 384h1v1h-1zM155 460h1v1h-1zM155 529h1v1h-1zM155 598h1v1h-1zM155 635h1v1h-1zM155 209h1v1h-1zM155 311h1v1h-1zM172 171h1v1h-1zM172 313h1v1h-1zM172 384h1v1h-1zM172 460h1v1h-1zM172 529h1v1h-1zM172 598h1v1h-1zM172 635h1v1h-1zM172 209h1v1h-1zM172 311h1v1h-1zM189 171h1v1h-1zM189 313h1v1h-1zM189 384h1v1h-1zM189 460h1v1h-1zM189 529h1v1h-1zM189 598h1v1h-1zM189 635h1v1h-1zM189 209h1v1h-1zM189 311h1v1h-1zM207 171h1v1h-1zM207 313h1v1h-1zM207 384h1v1h-1zM207 460h1v1h-1zM207 529h1v1h-1zM207 598h1v1h-1zM207 635h1v1h-1zM207 209h1v1h-1zM207 311h1v1h-1zM224 171h1v1h-1zM224 313h1v1h-1zM224 384h1v1h-1zM224 460h1v1h-1zM224 529h1v1h-1zM224 598h1v1h-1zM224 635h1v1h-1zM224 209h1v1h-1zM224 311h1v1h-1zM241 171h1v1h-1zM241 313h1v1h-1zM241 384h1v1h-1zM241 460h1v1h-1zM241 529h1v1h-1zM241 598h1v1h-1zM241 635h1v1h-1zM241 209h1v1h-1zM241 311h1v1h-1zM259 171h1v1h-1zM259 313h1v1h-1zM259 384h1v1h-1zM259 460h1v1h-1zM259 529h1v1h-1zM259 598h1v1h-1zM259 635h1v1h-1zM259 209h1v1h-1zM259 311h1v1h-1zM276 171h1v1h-1zM276 313h1v1h-1zM276 384h1v1h-1zM276 460h1v1h-1zM276 529h1v1h-1zM276 598h1v1h-1zM276 635h1v1h-1zM276 209h1v1h-1zM276 311h1v1h-1zM293 171h1v1h-1zM293 313h1v1h-1zM293 384h1v1h-1zM293 460h1v1h-1zM293 529h1v1h-1zM293 598h1v1h-1zM293 635h1v1h-1zM293 209h1v1h-1zM293 311h1v1h-1zM311 171h1v1h-1zM311 313h1v1h-1zM311 384h1v1h-1zM311 460h1v1h-1zM311 529h1v1h-1zM311 598h1v1h-1zM311 635h1v1h-1zM311 209h1v1h-1zM311 311h1v1h-1zM328 171h1v1h-1zM328 313h1v1h-1zM328 384h1v1h-1zM328 460h1v1h-1zM328 529h1v1h-1zM328 598h1v1h-1zM328 635h1v1h-1zM328 209h1v1h-1zM328 311h1v1h-1zM345 171h1v1h-1zM345 313h1v1h-1zM345 384h1v1h-1zM345 460h1v1h-1zM345 529h1v1h-1zM345 598h1v1h-1zM345 635h1v1h-1zM345 209h1v1h-1zM345 311h1v1h-1zM363 171h1v1h-1zM363 313h1v1h-1zM363 384h1v1h-1zM363 460h1v1h-1zM363 529h1v1h-1zM363 598h1v1h-1zM363 635h1v1h-1zM363 209h1v1h-1zM363 311h1v1h-1zM380 171h1v1h-1zM380 313h1v1h-1zM380 384h1v1h-1zM380 460h1v1h-1zM380 529h1v1h-1zM380 598h1v1h-1zM380 635h1v1h-1zM380 209h1v1h-1zM380 311h1v1h-1zM397 171h1v1h-1zM397 313h1v1h-1zM397 384h1v1h-1zM397 460h1v1h-1zM397 529h1v1h-1zM397 598h1v1h-1zM397 635h1v1h-1zM397 209h1v1h-1zM397 311h1v1h-1zM415 171h1v1h-1zM415 313h1v1h-1zM415 384h1v1h-1zM415 460h1v1h-1zM415 529h1v1h-1zM415 598h1v1h-1zM415 635h1v1h-1zM432 171h1v1h-1zM432 313h1v1h-1zM432 384h1v1h-1zM432 460h1v1h-1zM432 529h1v1h-1zM432 598h1v1h-1zM432 635h1v1h-1zM432 209h1v1h-1zM432 311h1v1h-1zM449 171h1v1h-1zM449 313h1v1h-1zM449 384h1v1h-1zM449 460h1v1h-1zM449 529h1v1h-1zM449 598h1v1h-1zM449 635h1v1h-1zM449 209h1v1h-1zM449 311h1v1h-1zM467 171h1v1h-1zM467 313h1v1h-1zM467 384h1v1h-1zM467 460h1v1h-1zM467 529h1v1h-1zM467 598h1v1h-1zM467 635h1v1h-1zM467 209h1v1h-1zM467 311h1v1h-1zM484 171h1v1h-1zM484 313h1v1h-1zM484 384h1v1h-1zM484 460h1v1h-1zM484 529h1v1h-1zM484 598h1v1h-1zM484 635h1v1h-1zM484 209h1v1h-1zM484 311h1v1h-1zM501 171h1v1h-1zM501 313h1v1h-1zM501 384h1v1h-1zM501 460h1v1h-1zM501 529h1v1h-1zM501 598h1v1h-1zM501 635h1v1h-1zM501 209h1v1h-1zM501 311h1v1h-1zM519 171h1v1h-1zM519 313h1v1h-1zM519 384h1v1h-1zM519 460h1v1h-1zM519 529h1v1h-1zM519 598h1v1h-1zM519 635h1v1h-1zM519 209h1v1h-1zM519 311h1v1h-1zM536 171h1v1h-1zM536 313h1v1h-1zM536 384h1v1h-1zM536 460h1v1h-1zM536 529h1v1h-1zM536 598h1v1h-1zM536 635h1v1h-1zM553 171h1v1h-1zM553 208h1v1h-1zM553 313h1v1h-1zM553 384h1v1h-1zM553 460h1v1h-1zM553 529h1v1h-1zM553 598h1v1h-1zM553 635h1v1h-1zM571 171h1v1h-1zM571 208h1v1h-1zM571 313h1v1h-1zM571 384h1v1h-1zM571 460h1v1h-1zM571 529h1v1h-1zM571 598h1v1h-1zM571 635h1v1h-1zM588 171h1v1h-1zM588 208h1v1h-1zM588 313h1v1h-1zM588 384h1v1h-1zM588 460h1v1h-1zM588 529h1v1h-1zM588 598h1v1h-1zM588 635h1v1h-1zM605 171h1v1h-1zM605 208h1v1h-1zM605 313h1v1h-1zM605 384h1v1h-1zM605 460h1v1h-1zM605 529h1v1h-1zM605 598h1v1h-1zM605 635h1v1h-1zM623 171h1v1h-1zM623 208h1v1h-1zM623 313h1v1h-1zM623 384h1v1h-1zM623 460h1v1h-1zM623 529h1v1h-1zM623 598h1v1h-1zM623 635h1v1h-1zM640 171h1v1h-1zM640 208h1v1h-1zM640 313h1v1h-1zM640 384h1v1h-1zM640 460h1v1h-1zM640 529h1v1h-1zM640 598h1v1h-1zM640 635h1v1h-1zM657 171h1v1h-1zM657 208h1v1h-1zM657 313h1v1h-1zM657 384h1v1h-1zM657 460h1v1h-1zM657 529h1v1h-1zM657 598h1v1h-1zM657 635h1v1h-1zM675 171h1v1h-1zM675 208h1v1h-1zM675 313h1v1h-1zM675 384h1v1h-1zM675 460h1v1h-1zM675 529h1v1h-1zM675 598h1v1h-1zM675 635h1v1h-1zM692 171h1v1h-1zM692 208h1v1h-1zM692 313h1v1h-1zM692 384h1v1h-1zM692 460h1v1h-1zM692 529h1v1h-1zM692 598h1v1h-1zM692 635h1v1h-1zM709 171h1v1h-1zM709 208h1v1h-1zM709 313h1v1h-1zM709 384h1v1h-1zM709 460h1v1h-1zM709 529h1v1h-1zM709 598h1v1h-1zM709 635h1v1h-1zM727 171h1v1h-1zM727 208h1v1h-1zM727 313h1v1h-1zM727 384h1v1h-1zM727 460h1v1h-1zM727 529h1v1h-1zM727 598h1v1h-1zM727 635h1v1h-1zM744 171h1v1h-1zM744 208h1v1h-1zM744 313h1v1h-1zM744 384h1v1h-1zM744 460h1v1h-1zM744 529h1v1h-1zM744 598h1v1h-1zM744 635h1v1h-1zM761 171h1v1h-1zM761 208h1v1h-1zM761 313h1v1h-1zM761 384h1v1h-1zM761 460h1v1h-1zM761 529h1v1h-1zM761 598h1v1h-1zM761 635h1v1h-1zM779 171h1v1h-1zM779 208h1v1h-1zM779 313h1v1h-1zM779 384h1v1h-1zM779 460h1v1h-1zM779 529h1v1h-1zM779 598h1v1h-1zM779 635h1v1h-1zM796 171h1v1h-1zM796 208h1v1h-1zM796 313h1v1h-1zM796 384h1v1h-1zM796 460h1v1h-1zM796 529h1v1h-1zM796 598h1v1h-1zM796 635h1v1h-1zM813 171h1v1h-1zM813 208h1v1h-1zM813 313h1v1h-1zM813 384h1v1h-1zM813 460h1v1h-1zM813 529h1v1h-1zM813 598h1v1h-1zM813 635h1v1h-1zM831 171h1v1h-1zM831 208h1v1h-1zM831 313h1v1h-1zM831 384h1v1h-1zM831 460h1v1h-1zM831 529h1v1h-1zM831 598h1v1h-1zM831 635h1v1h-1zM848 171h1v1h-1zM848 208h1v1h-1zM848 313h1v1h-1zM848 384h1v1h-1zM848 460h1v1h-1zM848 529h1v1h-1zM848 598h1v1h-1zM848 635h1v1h-1zM865 171h1v1h-1zM865 208h1v1h-1zM865 313h1v1h-1zM865 384h1v1h-1zM865 460h1v1h-1zM865 529h1v1h-1zM865 598h1v1h-1zM865 635h1v1h-1zM883 171h1v1h-1zM883 208h1v1h-1zM883 313h1v1h-1zM883 384h1v1h-1zM883 460h1v1h-1zM883 529h1v1h-1zM883 598h1v1h-1zM883 635h1v1h-1zM900 171h1v1h-1zM900 208h1v1h-1zM900 313h1v1h-1zM900 384h1v1h-1zM900 460h1v1h-1zM900 529h1v1h-1zM900 598h1v1h-1zM900 635h1v1h-1zM918 171h1v1h-1zM918 208h1v1h-1zM918 313h1v1h-1zM918 384h1v1h-1zM918 460h1v1h-1zM918 529h1v1h-1zM918 598h1v1h-1zM918 635h1v1h-1zM935 171h1v1h-1zM935 208h1v1h-1zM935 313h1v1h-1zM935 384h1v1h-1zM935 460h1v1h-1zM935 529h1v1h-1zM935 598h1v1h-1zM935 635h1v1h-1zM952 171h1v1h-1zM952 208h1v1h-1zM952 313h1v1h-1zM952 384h1v1h-1zM952 460h1v1h-1zM952 529h1v1h-1zM952 598h1v1h-1zM952 635h1v1h-1zM970 171h1v1h-1zM970 208h1v1h-1zM970 313h1v1h-1zM970 384h1v1h-1zM970 460h1v1h-1zM970 529h1v1h-1zM970 598h1v1h-1zM970 635h1v1h-1zM987 171h1v1h-1zM987 208h1v1h-1zM987 313h1v1h-1zM987 384h1v1h-1zM987 460h1v1h-1zM987 529h1v1h-1zM987 598h1v1h-1zM987 635h1v1h-1zM1004 171h1v1h-1zM1004 208h1v1h-1zM1004 313h1v1h-1zM1004 384h1v1h-1zM1004 460h1v1h-1zM1004 529h1v1h-1zM1004 598h1v1h-1zM1004 635h1v1h-1zM1022 171h1v1h-1zM1022 208h1v1h-1zM1022 313h1v1h-1zM1022 384h1v1h-1zM1022 460h1v1h-1zM1022 529h1v1h-1zM1022 598h1v1h-1zM1022 635h1v1h-1zM1039 171h1v1h-1zM1039 208h1v1h-1zM1039 313h1v1h-1zM1039 384h1v1h-1zM1039 460h1v1h-1zM1039 529h1v1h-1zM1039 598h1v1h-1zM1039 635h1v1h-1zM1056 171h1v1h-1zM1056 208h1v1h-1zM1056 313h1v1h-1zM1056 384h1v1h-1zM1056 460h1v1h-1zM1056 529h1v1h-1zM1056 598h1v1h-1zM1056 635h1v1h-1zM1074 171h1v1h-1zM1074 208h1v1h-1zM1074 313h1v1h-1zM1074 384h1v1h-1zM1074 460h1v1h-1zM1074 529h1v1h-1zM1074 598h1v1h-1zM1074 635h1v1h-1zM1091 171h1v1h-1zM1091 208h1v1h-1zM1091 313h1v1h-1zM1091 384h1v1h-1zM1091 460h1v1h-1zM1091 529h1v1h-1zM1091 598h1v1h-1zM1091 635h1v1h-1zM1108 171h1v1h-1zM1108 208h1v1h-1zM1108 313h1v1h-1zM1108 384h1v1h-1zM1108 460h1v1h-1zM1108 529h1v1h-1zM1108 598h1v1h-1zM1108 635h1v1h-1z" fill="#ffffff"/>
<path d="M7 172h1v1h-1zM7 206h1v1h-1zM7 314h1v1h-1zM7 382h1v1h-1zM7 385h1v1h-1zM7 458h1v1h-1zM7 461h1v1h-1zM7 527h1v1h-1zM7 530h1v1h-1zM7 596h1v1h-1zM7 636h1v1h-1zM7 673h1v1h-1zM25 172h1v1h-1zM25 206h1v1h-1zM25 314h1v1h-1zM25 382h1v1h-1zM25 385h1v1h-1zM25 458h1v1h-1zM25 461h1v1h-1zM25 527h1v1h-1zM25 530h1v1h-1zM25 596h1v1h-1zM25 636h1v1h-1zM25 673h1v1h-1zM42 172h1v1h-1zM42 206h1v1h-1zM42 314h1v1h-1zM42 382h1v1h-1zM42 385h1v1h-1zM42 458h1v1h-1zM42 461h1v1h-1zM42 527h1v1h-1zM42 530h1v1h-1zM42 596h1v1h-1zM42 636h1v1h-1zM42 673h1v1h-1zM59 172h1v1h-1zM59 206h1v1h-1zM59 314h1v1h-1zM59 382h1v1h-1zM59 385h1v1h-1zM59 458h1v1h-1zM59 461h1v1h-1zM59 527h1v1h-1zM59 530h1v1h-1zM59 596h1v1h-1zM59 636h1v1h-1zM59 673h1v1h-1zM77 172h1v1h-1zM77 206h1v1h-1zM77 314h1v1h-1zM77 382h1v1h-1zM77 385h1v1h-1zM77 458h1v1h-1zM77 461h1v1h-1zM77 527h1v1h-1zM77 530h1v1h-1zM77 596h1v1h-1zM77 636h1v1h-1zM77 673h1v1h-1zM94 172h1v1h-1zM94 206h1v1h-1zM94 314h1v1h-1zM94 382h1v1h-1zM94 385h1v1h-1zM94 458h1v1h-1zM94 461h1v1h-1zM94 527h1v1h-1zM94 530h1v1h-1zM94 596h1v1h-1zM94 636h1v1h-1zM94 673h1v1h-1zM111 172h1v1h-1zM111 206h1v1h-1zM111 314h1v1h-1zM111 382h1v1h-1zM111 385h1v1h-1zM111 458h1v1h-1zM111 461h1v1h-1zM111 527h1v1h-1zM111 530h1v1h-1zM111 596h1v1h-1zM111 636h1v1h-1zM111 673h1v1h-1zM129 172h1v1h-1zM129 206h1v1h-1zM129 314h1v1h-1zM129 382h1v1h-1zM129 385h1v1h-1zM129 458h1v1h-1zM129 461h1v1h-1zM129 527h1v1h-1zM129 530h1v1h-1zM129 596h1v1h-1zM129 636h1v1h-1zM129 673h1v1h-1zM146 172h1v1h-1zM146 206h1v1h-1zM146 314h1v1h-1zM146 382h1v1h-1zM146 385h1v1h-1zM146 458h1v1h-1zM146 461h1v1h-1zM146 527h1v1h-1zM146 530h1v1h-1zM146 596h1v1h-1zM146 636h1v1h-1zM146 673h1v1h-1zM163 172h1v1h-1zM163 206h1v1h-1zM163 314h1v1h-1zM163 382h1v1h-1zM163 385h1v1h-1zM163 458h1v1h-1zM163 461h1v1h-1zM163 527h1v1h-1zM163 530h1v1h-1zM163 596h1v1h-1zM163 636h1v1h-1zM163 673h1v1h-1zM181 172h1v1h-1zM181 206h1v1h-1zM181 314h1v1h-1zM181 382h1v1h-1zM181 385h1v1h-1zM181 458h1v1h-1zM181 461h1v1h-1zM181 527h1v1h-1zM181 530h1v1h-1zM181 596h1v1h-1zM181 636h1v1h-1zM181 673h1v1h-1zM198 172h1v1h-1zM198 206h1v1h-1zM198 314h1v1h-1zM198 382h1v1h-1zM198 385h1v1h-1zM198 458h1v1h-1zM198 461h1v1h-1zM198 527h1v1h-1zM198 530h1v1h-1zM198 596h1v1h-1zM198 636h1v1h-1zM198 673h1v1h-1zM215 172h1v1h-1zM215 206h1v1h-1zM215 314h1v1h-1zM215 382h1v1h-1zM215 385h1v1h-1zM215 458h1v1h-1zM215 461h1v1h-1zM215 527h1v1h-1zM215 530h1v1h-1zM215 596h1v1h-1zM215 636h1v1h-1zM215 673h1v1h-1zM233 172h1v1h-1zM233 206h1v1h-1zM233 314h1v1h-1zM233 382h1v1h-1zM233 385h1v1h-1zM233 458h1v1h-1zM233 461h1v1h-1zM233 527h1v1h-1zM233 530h1v1h-1zM233 596h1v1h-1zM233 636h1v1h-1zM233 673h1v1h-1zM250 172h1v1h-1zM250 206h1v1h-1zM250 314h1v1h-1zM250 382h1v1h-1zM250 385h1v1h-1zM250 458h1v1h-1zM250 461h1v1h-1zM250 527h1v1h-1zM250 530h1v1h-1zM250 596h1v1h-1zM250 636h1v1h-1zM250 673h1v1h-1zM267 172h1v1h-1zM267 206h1v1h-1zM267 314h1v1h-1zM267 382h1v1h-1zM267 385h1v1h-1zM267 458h1v1h-1zM267 461h1v1h-1zM267 527h1v1h-1zM267 530h1v1h-1zM267 596h1v1h-1zM267 636h1v1h-1zM267 673h1v1h-1zM285 172h1v1h-1zM285 206h1v1h-1zM285 314h1v1h-1zM285 382h1v1h-1zM285 385h1v1h-1zM285 458h1v1h-1zM285 461h1v1h-1zM285 527h1v1h-1zM285 530h1v1h-1zM285 596h1v1h-1zM285 636h1v1h-1zM285 673h1v1h-1zM302 172h1v1h-1zM302 206h1v1h-1zM302 314h1v1h-1zM302 382h1v1h-1zM302 385h1v1h-1zM302 458h1v1h-1zM302 461h1v1h-1zM302 527h1v1h-1zM302 530h1v1h-1zM302 596h1v1h-1zM302 636h1v1h-1zM302 673h1v1h-1zM319 172h1v1h-1zM319 206h1v1h-1zM319 314h1v1h-1zM319 382h1v1h-1zM319 385h1v1h-1zM319 458h1v1h-1zM319 461h1v1h-1zM319 527h1v1h-1zM319 530h1v1h-1zM319 596h1v1h-1zM319 636h1v1h-1zM319 673h1v1h-1zM337 172h1v1h-1zM337 206h1v1h-1zM337 314h1v1h-1zM337 382h1v1h-1zM337 385h1v1h-1zM337 458h1v1h-1zM337 461h1v1h-1zM337 527h1v1h-1zM337 530h1v1h-1zM337 596h1v1h-1zM337 636h1v1h-1zM337 673h1v1h-1zM354 172h1v1h-1zM354 206h1v1h-1zM354 314h1v1h-1zM354 382h1v1h-1zM354 385h1v1h-1zM354 458h1v1h-1zM354 461h1v1h-1zM354 527h1v1h-1zM354 530h1v1h-1zM354 596h1v1h-1zM354 636h1v1h-1zM354 673h1v1h-1zM371 172h1v1h-1zM371 206h1v1h-1zM371 314h1v1h-1zM371 382h1v1h-1zM371 385h1v1h-1zM371 458h1v1h-1zM371 461h1v1h-1zM371 527h1v1h-1zM371 530h1v1h-1zM371 596h1v1h-1zM371 636h1v1h-1zM371 673h1v1h-1zM389 172h1v1h-1zM389 206h1v1h-1zM389 314h1v1h-1zM389 382h1v1h-1zM389 385h1v1h-1zM389 458h1v1h-1zM389 461h1v1h-1zM389 527h1v1h-1zM389 530h1v1h-1zM389 596h1v1h-1zM389 636h1v1h-1zM389 673h1v1h-1zM406 172h1v1h-1zM406 206h1v1h-1zM406 314h1v1h-1zM406 382h1v1h-1zM406 385h1v1h-1zM406 458h1v1h-1zM406 461h1v1h-1zM406 527h1v1h-1zM406 530h1v1h-1zM406 596h1v1h-1zM406 636h1v1h-1zM406 673h1v1h-1zM423 172h1v1h-1zM423 206h1v1h-1zM423 314h1v1h-1zM423 382h1v1h-1zM423 385h1v1h-1zM423 458h1v1h-1zM423 461h1v1h-1zM423 527h1v1h-1zM423 530h1v1h-1zM423 596h1v1h-1zM423 636h1v1h-1zM423 673h1v1h-1zM441 172h1v1h-1zM441 206h1v1h-1zM441 314h1v1h-1zM441 382h1v1h-1zM441 385h1v1h-1zM441 458h1v1h-1zM441 461h1v1h-1zM441 527h1v1h-1zM441 530h1v1h-1zM441 596h1v1h-1zM441 636h1v1h-1zM441 673h1v1h-1zM458 172h1v1h-1zM458 206h1v1h-1zM458 314h1v1h-1zM458 382h1v1h-1zM458 385h1v1h-1zM458 458h1v1h-1zM458 461h1v1h-1zM458 527h1v1h-1zM458 530h1v1h-1zM458 596h1v1h-1zM458 636h1v1h-1zM458 673h1v1h-1zM475 172h1v1h-1zM475 206h1v1h-1zM475 314h1v1h-1zM475 382h1v1h-1zM475 385h1v1h-1zM475 458h1v1h-1zM475 461h1v1h-1zM475 527h1v1h-1zM475 530h1v1h-1zM475 596h1v1h-1zM475 636h1v1h-1zM475 673h1v1h-1zM493 172h1v1h-1zM493 206h1v1h-1zM493 314h1v1h-1zM493 382h1v1h-1zM493 385h1v1h-1zM493 458h1v1h-1zM493 461h1v1h-1zM493 527h1v1h-1zM493 530h1v1h-1zM493 596h1v1h-1zM493 636h1v1h-1zM493 673h1v1h-1zM510 172h1v1h-1zM510 206h1v1h-1zM510 314h1v1h-1zM510 382h1v1h-1zM510 385h1v1h-1zM510 458h1v1h-1zM510 636h1v1h-1zM510 673h1v1h-1zM527 172h1v1h-1zM527 206h1v1h-1zM527 314h1v1h-1zM527 382h1v1h-1zM527 385h1v1h-1zM527 458h1v1h-1zM527 636h1v1h-1zM527 673h1v1h-1zM16 172h1v1h-1zM16 206h1v1h-1zM16 314h1v1h-1zM16 382h1v1h-1zM16 385h1v1h-1zM16 458h1v1h-1zM16 461h1v1h-1zM16 527h1v1h-1zM16 530h1v1h-1zM16 596h1v1h-1zM16 636h1v1h-1zM16 673h1v1h-1zM33 172h1v1h-1zM33 206h1v1h-1zM33 314h1v1h-1zM33 382h1v1h-1zM33 385h1v1h-1zM33 458h1v1h-1zM33 461h1v1h-1zM33 527h1v1h-1zM33 530h1v1h-1zM33 596h1v1h-1zM33 636h1v1h-1zM33 673h1v1h-1zM51 172h1v1h-1zM51 206h1v1h-1zM51 314h1v1h-1zM51 382h1v1h-1zM51 385h1v1h-1zM51 458h1v1h-1zM51 461h1v1h-1zM51 527h1v1h-1zM51 530h1v1h-1zM51 596h1v1h-1zM51 636h1v1h-1zM51 673h1v1h-1zM68 172h1v1h-1zM68 206h1v1h-1zM68 314h1v1h-1zM68 382h1v1h-1zM68 385h1v1h-1zM68 458h1v1h-1zM68 461h1v1h-1zM68 527h1v1h-1zM68 530h1v1h-1zM68 596h1v1h-1zM68 636h1v1h-1zM68 673h1v1h-1zM85 172h1v1h-1zM85 206h1v1h-1zM85 314h1v1h-1zM85 382h1v1h-1zM85 385h1v1h-1zM85 458h1v1h-1zM85 461h1v1h-1zM85 527h1v1h-1zM85 530h1v1h-1zM85 596h1v1h-1zM85 636h1v1h-1zM85 673h1v1h-1zM103 172h1v1h-1zM103 206h1v1h-1zM103 314h1v1h-1zM103 382h1v1h-1zM103 385h1v1h-1zM103 458h1v1h-1zM103 461h1v1h-1zM103 527h1v1h-1zM103 530h1v1h-1zM103 596h1v1h-1zM103 636h1v1h-1zM103 673h1v1h-1zM120 172h1v1h-1zM120 206h1v1h-1zM120 314h1v1h-1zM120 382h1v1h-1zM120 385h1v1h-1zM120 458h1v1h-1zM120 461h1v1h-1zM120 527h1v1h-1zM120 530h1v1h-1zM120 596h1v1h-1zM120 636h1v1h-1zM120 673h1v1h-1zM137 172h1v1h-1zM137 206h1v1h-1zM137 314h1v1h-1zM137 382h1v1h-1zM137 385h1v1h-1zM137 458h1v1h-1zM137 461h1v1h-1zM137 527h1v1h-1zM137 530h1v1h-1zM137 596h1v1h-1zM137 636h1v1h-1zM137 673h1v1h-1zM155 172h1v1h-1zM155 206h1v1h-1zM155 314h1v1h-1zM155 382h1v1h-1zM155 385h1v1h-1zM155 458h1v1h-1zM155 461h1v1h-1zM155 527h1v1h-1zM155 530h1v1h-1zM155 596h1v1h-1zM155 636h1v1h-1zM155 673h1v1h-1zM172 172h1v1h-1zM172 206h1v1h-1zM172 314h1v1h-1zM172 382h1v1h-1zM172 385h1v1h-1zM172 458h1v1h-1zM172 461h1v1h-1zM172 527h1v1h-1zM172 530h1v1h-1zM172 596h1v1h-1zM172 636h1v1h-1zM172 673h1v1h-1zM189 172h1v1h-1zM189 206h1v1h-1zM189 314h1v1h-1zM189 382h1v1h-1zM189 385h1v1h-1zM189 458h1v1h-1zM189 461h1v1h-1zM189 527h1v1h-1zM189 530h1v1h-1zM189 596h1v1h-1zM189 636h1v1h-1zM189 673h1v1h-1zM207 172h1v1h-1zM207 206h1v1h-1zM207 314h1v1h-1zM207 382h1v1h-1zM207 385h1v1h-1zM207 458h1v1h-1zM207 461h1v1h-1zM207 527h1v1h-1zM207 530h1v1h-1zM207 596h1v1h-1zM207 636h1v1h-1zM207 673h1v1h-1zM224 172h1v1h-1zM224 206h1v1h-1zM224 314h1v1h-1zM224 382h1v1h-1zM224 385h1v1h-1zM224 458h1v1h-1zM224 461h1v1h-1zM224 527h1v1h-1zM224 530h1v1h-1zM224 596h1v1h-1zM224 636h1v1h-1zM224 673h1v1h-1zM241 172h1v1h-1zM241 206h1v1h-1zM241 314h1v1h-1zM241 382h1v1h-1zM241 385h1v1h-1zM241 458h1v1h-1zM241 461h1v1h-1zM241 527h1v1h-1zM241 530h1v1h-1zM241 596h1v1h-1zM241 636h1v1h-1zM241 673h1v1h-1zM259 172h1v1h-1zM259 206h1v1h-1zM259 314h1v1h-1zM259 382h1v1h-1zM259 385h1v1h-1zM259 458h1v1h-1zM259 461h1v1h-1zM259 527h1v1h-1zM259 530h1v1h-1zM259 596h1v1h-1zM259 636h1v1h-1zM259 673h1v1h-1zM276 172h1v1h-1zM276 206h1v1h-1zM276 314h1v1h-1zM276 382h1v1h-1zM276 385h1v1h-1zM276 458h1v1h-1zM276 461h1v1h-1zM276 527h1v1h-1zM276 530h1v1h-1zM276 596h1v1h-1zM276 636h1v1h-1zM276 673h1v1h-1zM293 172h1v1h-1zM293 206h1v1h-1zM293 314h1v1h-1zM293 382h1v1h-1zM293 385h1v1h-1zM293 458h1v1h-1zM293 461h1v1h-1zM293 527h1v1h-1zM293 530h1v1h-1zM293 596h1v1h-1zM293 636h1v1h-1zM293 673h1v1h-1zM311 172h1v1h-1zM311 206h1v1h-1zM311 314h1v1h-1zM311 382h1v1h-1zM311 385h1v1h-1zM311 458h1v1h-1zM311 461h1v1h-1zM311 527h1v1h-1zM311 530h1v1h-1zM311 596h1v1h-1zM311 636h1v1h-1zM311 673h1v1h-1zM328 172h1v1h-1zM328 206h1v1h-1zM328 314h1v1h-1zM328 382h1v1h-1zM328 385h1v1h-1zM328 458h1v1h-1zM328 461h1v1h-1zM328 527h1v1h-1zM328 530h1v1h-1zM328 596h1v1h-1zM328 636h1v1h-1zM328 673h1v1h-1zM345 172h1v1h-1zM345 206h1v1h-1zM345 314h1v1h-1zM345 382h1v1h-1zM345 385h1v1h-1zM345 458h1v1h-1zM345 461h1v1h-1zM345 527h1v1h-1zM345 530h1v1h-1zM345 596h1v1h-1zM345 636h1v1h-1zM345 673h1v1h-1zM363 172h1v1h-1zM363 206h1v1h-1zM363 314h1v1h-1zM363 382h1v1h-1zM363 385h1v1h-1zM363 458h1v1h-1zM363 461h1v1h-1zM363 527h1v1h-1zM363 530h1v1h-1zM363 596h1v1h-1zM363 636h1v1h-1zM363 673h1v1h-1zM380 172h1v1h-1zM380 206h1v1h-1zM380 314h1v1h-1zM380 382h1v1h-1zM380 385h1v1h-1zM380 458h1v1h-1zM380 461h1v1h-1zM380 527h1v1h-1zM380 530h1v1h-1zM380 596h1v1h-1zM380 636h1v1h-1zM380 673h1v1h-1zM397 172h1v1h-1zM397 206h1v1h-1zM397 314h1v1h-1zM397 382h1v1h-1zM397 385h1v1h-1zM397 458h1v1h-1zM397 461h1v1h-1zM397 527h1v1h-1zM397 530h1v1h-1zM397 596h1v1h-1zM397 636h1v1h-1zM397 673h1v1h-1zM415 172h1v1h-1zM415 206h1v1h-1zM415 314h1v1h-1zM415 382h1v1h-1zM415 385h1v1h-1zM415 458h1v1h-1zM415 461h1v1h-1zM415 527h1v1h-1zM415 530h1v1h-1zM415 596h1v1h-1zM415 636h1v1h-1zM415 673h1v1h-1zM432 172h1v1h-1zM432 206h1v1h-1zM432 314h1v1h-1zM432 382h1v1h-1zM432 385h1v1h-1zM432 458h1v1h-1zM432 461h1v1h-1zM432 527h1v1h-1zM432 530h1v1h-1zM432 596h1v1h-1zM432 636h1v1h-1zM432 673h1v1h-1zM449 172h1v1h-1zM449 206h1v1h-1zM449 314h1v1h-1zM449 382h1v1h-1zM449 385h1v1h-1zM449 458h1v1h-1zM449 461h1v1h-1zM449 527h1v1h-1zM449 530h1v1h-1zM449 596h1v1h-1zM449 636h1v1h-1zM449 673h1v1h-1zM467 172h1v1h-1zM467 206h1v1h-1zM467 314h1v1h-1zM467 382h1v1h-1zM467 385h1v1h-1zM467 458h1v1h-1zM467 461h1v1h-1zM467 527h1v1h-1zM467 530h1v1h-1zM467 596h1v1h-1zM467 636h1v1h-1zM467 673h1v1h-1zM484 172h1v1h-1zM484 206h1v1h-1zM484 314h1v1h-1zM484 382h1v1h-1zM484 385h1v1h-1zM484 458h1v1h-1zM484 461h1v1h-1zM484 527h1v1h-1zM484 530h1v1h-1zM484 596h1v1h-1zM484 636h1v1h-1zM484 673h1v1h-1zM501 172h1v1h-1zM501 206h1v1h-1zM501 314h1v1h-1zM501 382h1v1h-1zM501 385h1v1h-1zM501 458h1v1h-1zM501 461h1v1h-1zM501 527h1v1h-1zM501 636h1v1h-1zM501 673h1v1h-1zM519 172h1v1h-1zM519 206h1v1h-1zM519 314h1v1h-1zM519 382h1v1h-1zM519 385h1v1h-1zM519 458h1v1h-1zM519 636h1v1h-1zM519 673h1v1h-1zM536 172h1v1h-1zM536 206h1v1h-1zM536 314h1v1h-1zM536 382h1v1h-1zM536 385h1v1h-1zM536 458h1v1h-1zM536 636h1v1h-1zM536 673h1v1h-1z" fill="#e8f0ff"/>
<path d="M7 144h1v2h-1zM25 123h1v27h-1zM42 144h1v2h-1zM59 144h1v2h-1zM77 144h1v2h-1zM94 123h1v27h-1zM111 144h1v2h-1zM129 144h1v2h-1zM146 144h1v2h-1zM163 123h1v27h-1zM181 144h1v2h-1zM198 144h1v2h-1zM215 144h1v2h-1zM233 123h1v27h-1zM250 144h1v2h-1zM267 144h1v2h-1zM285 144h1v2h-1zM302 123h1v27h-1zM319 144h1v2h-1zM337 144h1v2h-1zM354 144h1v2h-1zM371 123h1v27h-1zM389 144h1v2h-1zM406 144h1v2h-1zM423 144h1v2h-1zM441 123h1v27h-1zM458 144h1v2h-1zM475 144h1v2h-1zM493 144h1v2h-1zM510 123h1v27h-1zM527 144h1v2h-1zM545 144h1v6h-1zM553 146h1v4h-1zM562 144h1v6h-1zM571 146h1v4h-1zM579 123h1v27h-1zM588 146h1v4h-1zM597 144h1v6h-1zM605 146h1v4h-1zM614 144h1v6h-1zM623 146h1v4h-1zM631 144h1v6h-1zM640 146h1v4h-1zM649 123h1v27h-1zM657 146h1v4h-1zM666 144h1v6h-1zM675 146h1v4h-1zM683 144h1v6h-1zM692 146h1v4h-1zM701 144h1v6h-1zM709 146h1v4h-1zM718 123h1v27h-1zM727 146h1v4h-1zM735 144h1v6h-1zM744 146h1v4h-1zM753 144h1v6h-1zM761 146h1v4h-1zM770 144h1v6h-1zM779 146h1v4h-1zM787 123h1v27h-1zM796 146h1v4h-1zM805 144h1v6h-1zM813 146h1v4h-1zM822 144h1v6h-1zM831 146h1v4h-1zM839 144h1v6h-1zM848 146h1v4h-1zM857 123h1v27h-1zM865 146h1v4h-1zM874 144h1v6h-1zM883 146h1v4h-1zM892 144h1v6h-1zM900 146h1v4h-1zM909 144h1v6h-1zM918 146h1v4h-1zM926 123h1v27h-1zM935 146h1v4h-1zM944 144h1v6h-1zM952 146h1v4h-1zM961 144h1v6h-1zM970 146h1v4h-1zM978 144h1v6h-1zM987 146h1v4h-1zM996 123h1v27h-1zM1004 146h1v4h-1zM1013 144h1v6h-1zM1022 146h1v4h-1zM1030 144h1v6h-1zM1039 146h1v4h-1zM1048 144h1v6h-1zM1056 146h1v4h-1zM1065 123h1v27h-1zM1074 146h1v4h-1zM1082 144h1v6h-1zM1091 146h1v4h-1zM1100 144h1v6h-1zM1108 146h1v4h-1zM1117 144h1v6h-1zM1126 146h1v4h-1zM1134 123h1v27h-1z" fill="#cfd8e0"/>
</svg>
<div class="abs" style="left:430px;top:211px;width:97px;height:12px;background:#fff8e2;font-size:9.5px;line-height:11px;color:#15152a;white-space:nowrap;overflow:hidden;padding-left:1px">Take 2/2: 02-EZdrum...</div>
<div class="mnum" style="left:-40px">140</div>
<div class="mnum" style="left:30px">141</div>
<div class="mnum" style="left:99px">142</div>
<div class="mnum" style="left:168px">143</div>
<div class="mnum" style="left:238px">144</div>
<div class="mnum" style="left:307px">145</div>
<div class="mnum" style="left:376px">146</div>
<div class="mnum" style="left:446px">147</div>
<div class="mnum" style="left:515px">148</div>
<div class="mnum" style="left:584px">149</div>
<div class="mnum" style="left:1001px">155</div>
<div class="mnum" style="left:1070px">156</div>
<div class="mnum" style="left:1139px">157</div>
<div class="mnum" style="left:584px">149</div>
<div id="vs" class="abs"></div><div id="vsup" class="abs"></div>
<svg class="abs" style="left:1123px;top:150px" width="19" height="19" viewBox="0 0 19 19"><path d="M5 11.5 L9.5 7 L14 11.5" fill="none" stroke="#0c0c0c" stroke-width="1.8"/></svg>
<div id="endline" class="abs"></div>
<div class="abs" style="left:423px;top:133px;width:1px;height:553px;background:#1d6aa3"></div>
<svg class="abs" style="left:414px;top:124px" width="20" height="12" viewBox="0 0 20 12"><path d="M1 1 L18.5 1 L9.7 9.6 Z" fill="#0d1a22" stroke="#1a3342" stroke-width=".6"/></svg>
<div class="abs" style="left:545px;top:111px;width:1px;height:30px;background:#d01818"></div>
<svg class="abs" style="left:544px;top:97px" width="16" height="16" viewBox="0 0 16 16"><path d="M5.300 1.600 L10.100 1.600 L13.800 5.200 L13.800 10 L10.100 13.800 L5.300 13.800 L1.600 10 L1.600 5.200 Z" fill="#cc0f0f" stroke="#e2a0a0" stroke-width=".8"/><text x="7.700" y="11.200" font-family="Liberation Sans,sans-serif" font-size="9.800" font-weight="bold" fill="#fff" text-anchor="middle">2</text></svg>
<svg class="abs" style="left:533px;top:139px" width="14" height="13" viewBox="0 0 14 13"><path d="M2.200 1.500 L12.500 1.500 L12.500 11.600 Z" fill="#0c1048" stroke="#e4ecf2" stroke-width="1"/></svg>
<div id="fl" class="abs"></div>
<div class="btn " style="left:624px;top:89px;"><svg width="26" height="28" viewBox="0 0 26 28" ><path d="M8.9 7.5 Q15.5 1.2000000000000002 22.1 7.5 Q15.5 13.8 8.9 7.5 Z" fill="none" stroke="#5fe88c" stroke-width="1.1"/><path d="M11.5 8.5 Q15.5 11.5 19.5 8.5" fill="none" stroke="#5fe88c" stroke-width=".9"/><circle cx="15.5" cy="7.0" r="2.1" fill="#10e848"/><rect x="2" y="13.85" width="11.200" height="1.300" fill="#fff"/><rect x="5.9" y="13.0" width="3.200" height="3" rx=".5" fill="#fff"/><rect x="2" y="17.85" width="11.200" height="1.300" fill="#fff"/><rect x="8.1" y="17.0" width="3.200" height="3" rx=".5" fill="#fff"/><rect x="2" y="21.85" width="11.200" height="1.300" fill="#fff"/><rect x="2.9" y="21.0" width="3.200" height="3" rx=".5" fill="#fff"/></svg></div>
<div class="btn " style="left:654px;top:89px;"><svg width="26" height="28" viewBox="0 0 26 28" ><circle cx="6" cy="13.7" r="4.850" fill="#fff"/><circle cx="6.00" cy="16.25" r="1.450" fill="#2c3c44"/><circle cx="3.79" cy="12.42" r="1.450" fill="#2c3c44"/><circle cx="8.21" cy="12.42" r="1.450" fill="#2c3c44"/><circle cx="18" cy="13.7" r="4.850" fill="#fff"/><circle cx="19.27" cy="15.91" r="1.450" fill="#2c3c44"/><circle cx="15.45" cy="13.70" r="1.450" fill="#2c3c44"/><circle cx="19.27" cy="11.49" r="1.450" fill="#2c3c44"/><rect x="6" y="17" width="12" height="1.550" fill="#fff"/></svg></div>
<div class="btn " style="left:684px;top:89px;"><svg width="26" height="28" viewBox="0 0 26 28" ><rect x="6.100" y="4.900" width="12.100" height="17.200" fill="#fff"/><rect x="9.200" y="7" width="5.900" height="1.500" fill="#2c3c44"/><circle cx="12.200" cy="16" r="5" fill="#2c3c44"/><circle cx="12.200" cy="16" r="1.900" fill="#fff"/></svg></div>
<div class="btn txt " style="left:716px;top:89px;width:52px;"><div>Вставить</div><div>новый MIDI</div></div>
<div class="btn " style="left:774px;top:89px;"><svg width="26" height="28" viewBox="0 0 26 28" shape-rendering="crispEdges"><g fill="#fff"><rect x="1" y="14" width="1" height="1"/><rect x="3" y="4" width="1" height="1"/><rect x="3" y="6" width="1" height="1"/><rect x="3" y="8" width="1" height="1"/><rect x="3" y="10" width="1" height="1"/><rect x="3" y="12" width="1" height="1"/><rect x="3" y="14" width="1" height="1"/><rect x="5" y="12" width="1" height="1"/><rect x="5" y="14" width="1" height="1"/><rect x="5" y="16" width="1" height="1"/><rect x="7" y="14" width="1" height="1"/><rect x="7" y="16" width="1" height="1"/><rect x="7" y="18" width="1" height="1"/><rect x="7" y="20" width="1" height="1"/><rect x="7" y="22" width="1" height="1"/><rect x="7" y="24" width="1" height="1"/><rect x="9" y="10" width="1" height="1"/><rect x="9" y="12" width="1" height="1"/><rect x="9" y="14" width="1" height="1"/><rect x="9" y="16" width="1" height="1"/><rect x="9" y="18" width="1" height="1"/><rect x="11" y="6" width="1" height="1"/><rect x="11" y="8" width="1" height="1"/><rect x="11" y="10" width="1" height="1"/><rect x="11" y="12" width="1" height="1"/><rect x="11" y="14" width="1" height="1"/><rect x="13" y="10" width="1" height="1"/><rect x="13" y="12" width="1" height="1"/><rect x="13" y="14" width="1" height="1"/><rect x="13" y="16" width="1" height="1"/><rect x="15" y="14" width="1" height="1"/><rect x="15" y="16" width="1" height="1"/><rect x="15" y="18" width="1" height="1"/><rect x="17" y="14" width="1" height="1"/><rect x="17" y="16" width="1" height="1"/><rect x="19" y="12" width="1" height="1"/><rect x="19" y="14" width="1" height="1"/><rect x="21" y="14" width="1" height="1"/></g></svg></div>
<div class="btn " style="left:804px;top:89px;"><svg width="26" height="28" viewBox="0 0 26 28" ><circle cx="12" cy="13.900" r="9.500" fill="none" stroke="#fff" stroke-width="1.150"/><path d="M12 6.800 V14 L15.600 17" fill="none" stroke="#fff" stroke-width="1.150"/><path d="M18.60 13.90 L20.00 13.90" stroke="#8b989e" stroke-width=".800"/><path d="M17.72 17.20 L18.93 17.90" stroke="#8b989e" stroke-width=".800"/><path d="M15.30 19.62 L16.00 20.83" stroke="#8b989e" stroke-width=".800"/><path d="M12.00 20.50 L12.00 21.90" stroke="#8b989e" stroke-width=".800"/><path d="M8.70 19.62 L8.00 20.83" stroke="#8b989e" stroke-width=".800"/><path d="M6.28 17.20 L5.07 17.90" stroke="#8b989e" stroke-width=".800"/><path d="M5.40 13.90 L4.00 13.90" stroke="#8b989e" stroke-width=".800"/><path d="M6.28 10.60 L5.07 9.90" stroke="#8b989e" stroke-width=".800"/><path d="M8.70 8.18 L8.00 6.97" stroke="#8b989e" stroke-width=".800"/><path d="M12.00 7.30 L12.00 5.90" stroke="#8b989e" stroke-width=".800"/><path d="M15.30 8.18 L16.00 6.97" stroke="#8b989e" stroke-width=".800"/><path d="M17.72 10.60 L18.93 9.90" stroke="#8b989e" stroke-width=".800"/></svg></div>
<div class="btn " style="left:834px;top:89px;"><svg width="26" height="28" viewBox="0 0 26 28" ><ellipse cx="10" cy="20.200" rx="3.300" ry="2.300" fill="#fff" transform="rotate(-25 10 20.200)"/><rect x="12.300" y="5" width="1.200" height="15" fill="#fff"/><path d="M13.400 5 Q14 8 16.400 10.200 Q17.800 12 17 14.800 L16.400 14.800 Q16.600 12.500 13.400 9.800 Z" fill="#fff"/><path d="M13.400 9.500 Q14 12 16.400 14 Q17.600 16 16.800 18.500 L16.200 18.500 Q16.500 16.500 13.400 13.600 Z" fill="#fff"/></svg></div>
<div class="btn green" style="left:864px;top:89px;"><svg width="26" height="28" viewBox="0 0 26 28" ><path d="M8.900 8 L11.400 4.300 L13.900 8 Z" fill="#fff"/><rect x=".500" y="13.800" width="5.600" height="6.800" fill="none" stroke="#fff" stroke-width="1.100"/><rect x="17.900" y="13.800" width="5.600" height="6.800" fill="none" stroke="#fff" stroke-width="1.100"/><rect x="6.800" y="10.100" width="10.200" height="7.200" fill="#10f048"/><path d="M10.600 26 Q8.200 22.500 7.900 19.600 Q8.900 19 10.300 20.800 V13.400 Q11.400 11.500 12.800 13.400 V17.300 L16 18.300 Q17.300 19 17 21.500 L16 26 Z" fill="#fff"/></svg></div>
<div class="btn tan" style="left:892px;top:88px;"><svg width="28" height="28" viewBox="0 0 28 28" ><path d="M1 .500 H27 M1 27.5 H27 M.500 1 V27 M27.5 1 V27" stroke="#9a5a1c" stroke-width="1" stroke-dasharray="1 3" shape-rendering="crispEdges"/><path d="M2 1.500 H26 M1.500 2 V26" stroke="#e9a050" stroke-width="1" stroke-dasharray="1 2" shape-rendering="crispEdges" opacity=".3"/><path d="M3.500 4.500 V24.500 M8.500 4.500 V24.500 M13.500 4.500 V24.500 M18.500 4.500 V24.500 M23.500 4.500 V24.500" stroke="#f6f6ee" stroke-width="1.200" stroke-dasharray="2 1.100"/></svg></div>
<div class="btn tan" style="left:922px;top:88px;"><svg width="28" height="28" viewBox="0 0 28 28" ><path d="M1 .500 H27 M1 27.5 H27 M.500 1 V27 M27.5 1 V27" stroke="#9a5a1c" stroke-width="1" stroke-dasharray="1 3" shape-rendering="crispEdges"/><path d="M2 1.500 H26 M1.500 2 V26" stroke="#e9a050" stroke-width="1" stroke-dasharray="1 2" shape-rendering="crispEdges" opacity=".3"/><path d="M9 13.600 L14 6.800 L18.800 11.800" fill="none" stroke="#fff" stroke-width="1"/><g fill="#9c917f" stroke="#fff" stroke-width="1"><circle cx="9" cy="13.600" r="1.600"/><circle cx="14" cy="6.800" r="1.600"/><circle cx="18.800" cy="11.800" r="1.600"/></g><rect x="7.300" y="18.300" width="13.500" height="6.300" fill="#4a9da0" stroke="#a8e6e6" stroke-width=".800"/><path d="M2 10.200 L5.200 7.700 V12.700 Z M26 10.200 L22.800 7.700 V12.700 Z M2 21.500 L5.200 19 V24 Z M26 21.500 L22.800 19 V24 Z" fill="#fff"/></svg></div>
<div class="btn txt " style="left:625px;top:119px;width:53px;"><div>Настроит</div><div>глобальн за</div></div>
<div class="btn txt " style="left:684px;top:119px;"><div>Сбро</div><div>наст</div></div>
<div class="btn txt " style="left:716px;top:119px;width:52px;"><div>Настроит</div><div>запуск экш</div></div>
<div class="btn txt " style="left:774px;top:119px;"><div>Сбро</div><div>наст</div></div>
<div class="btn txt " style="left:806px;top:119px;width:52px;"><div>Показать</div><div>запуск экш</div></div>
<div class="btn txt " style="left:879px;top:119px;"><div>Прав</div><div>меня</div></div>
<svg class="abs" style="left:945px;top:140px" width="10" height="10" viewBox="0 0 10 10" shape-rendering="crispEdges"><g fill="#d8dde0"><rect x="7" y="1" width="2" height="2"/><rect x="4" y="4" width="2" height="2"/><rect x="7" y="4" width="2" height="2"/><rect x="1" y="7" width="2" height="2"/><rect x="4" y="7" width="2" height="2"/><rect x="7" y="7" width="2" height="2"/></g></svg>
<svg class="abs" style="left:626px;top:280px" width="9" height="18" viewBox="0 0 9 18" shape-rendering="crispEdges"><g fill="#111"><rect x="4" y="2" width="1" height="14"/><rect x="1" y="1" width="3" height="1"/><rect x="5" y="1" width="3" height="1"/><rect x="1" y="16" width="3" height="1"/><rect x="5" y="16" width="3" height="1"/></g></svg>
</div></body></html>
